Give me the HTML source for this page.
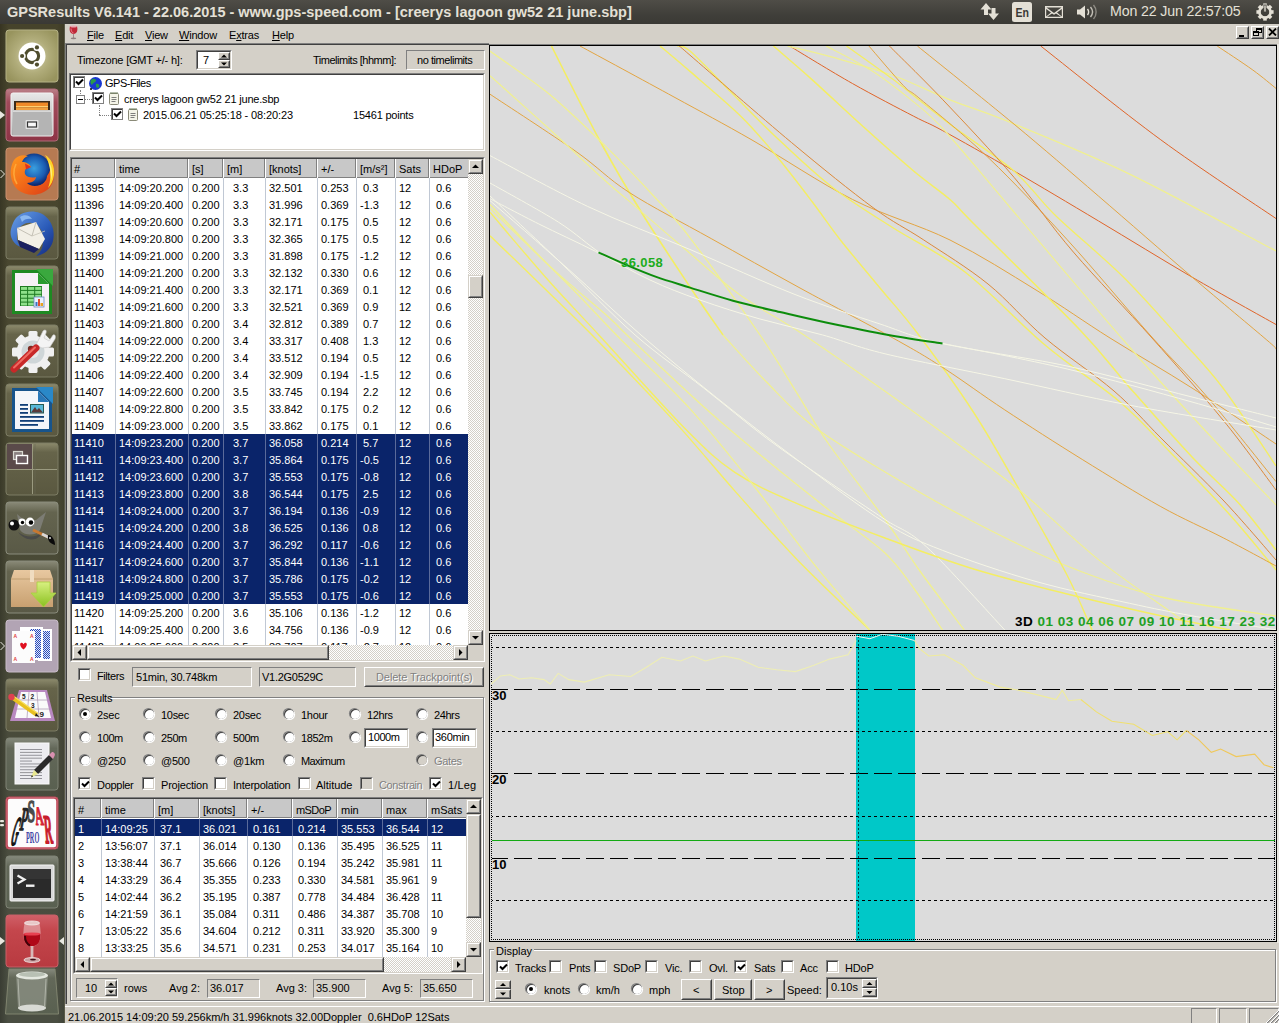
<!DOCTYPE html><html><head><meta charset="utf-8"><title>GPSResults</title><style>
*{box-sizing:border-box;margin:0;padding:0}
html,body{width:1279px;height:1023px;overflow:hidden;background:#d4d0c8}
body{font-family:"Liberation Sans",sans-serif;font-size:11px;color:#000;position:relative}
.a{position:absolute}
.t{position:absolute;white-space:nowrap;line-height:13px;height:13px}
.sunk{position:absolute;border:1px solid;border-color:#808080 #fff #fff #808080;background:#d4d0c8}
.sunk2{position:absolute;border:1px solid;border-color:#808080 #fff #fff #808080}
.sunk2>i{position:absolute;left:0;top:0;right:0;bottom:0;border:1px solid;border-color:#404040 #d4d0c8 #d4d0c8 #404040;background:#fff}
.btn{position:absolute;background:#d4d0c8;border:1px solid;border-color:#fff #404040 #404040 #fff}
.btn>i{position:absolute;left:0;top:0;right:0;bottom:0;border:1px solid;border-color:#d4d0c8 #808080 #808080 #d4d0c8}
.sb{position:absolute;background:#d4d0c8;border:1px solid;border-color:#d4d0c8 #404040 #404040 #d4d0c8}
.sb>i{position:absolute;left:0;top:0;right:0;bottom:0;border:1px solid;border-color:#fff #808080 #808080 #fff}
.trk{position:absolute;background-color:#fff;background-image:conic-gradient(#d4d0c8 25%,#fff 0 50%,#d4d0c8 0 75%,#fff 0);background-size:2px 2px}
.cb{position:absolute;width:13px;height:13px;border:1px solid;border-color:#808080 #fff #fff #808080}
.cb>i{position:absolute;left:0;top:0;right:0;bottom:0;border:1px solid;border-color:#404040 #d4d0c8 #d4d0c8 #404040;background:#fff}
.cb.dis>i{background:#d4d0c8}
.rb{position:absolute;width:10px;height:10px;border-radius:50%;background:#fff;box-shadow:inset 1px 1px 0 0 #404040, -0.5px -0.5px 0 0.6px #808080, 0.5px 0.5px 0 0.6px #fff}
.hd{position:absolute;background:#c8c8c8}
</style></head><body>
<div class="a" style="left:0;top:0;width:1279px;height:24px;background:linear-gradient(#4f4d47,#403f3a 60%,#3a3935)"></div>
<div class="t" style="left:7px;top:4px;font-weight:bold;font-size:14.5px;color:#e4e0d6;line-height:17px;height:17px">GPSResults V6.141 - 22.06.2015 - www.gps-speed.com - [creerys lagoon gw52 21 june.sbp]</div>
<div class="t" style="left:1110px;top:3px;font-size:14.2px;letter-spacing:-0.15px;color:#e4e0d6;line-height:17px;height:17px">Mon 22 Jun 22:57:05</div>
<svg class="a" style="left:978px;top:0" width="301" height="24" viewBox="978 0 301 24"><g fill="#e4e0d6"><path d="M986 3 L991.5 9.5 H988 V15 H984 V9.5 H980.5Z"/><path d="M993.5 20 L988 13.5 H991.5 V8 H995.5 V13.5 H999Z"/><rect x="1012" y="2" width="20" height="20" rx="2.5"/><path d="M1045 6 H1063 V18 H1045Z M1046.5 7.5 L1054 13 L1061.5 7.5Z M1046.2 9 V16.5 L1051 12.5Z M1061.8 9 V16.5 L1057 12.5Z M1047 16.8 L1052 13.4 L1054 14.8 L1056 13.4 L1061 16.8Z" fill-rule="evenodd"/><path d="M1077 9.5 H1080 L1085 5.5 V18.5 L1080 14.5 H1077Z"/></g><g fill="none" stroke="#e4e0d6" stroke-width="1.4"><path d="M1087.5 9 C1089 11 1089 13 1087.5 15"/><path d="M1090.5 7 C1093 10 1093 14 1090.5 17" opacity="0.8"/><path d="M1093.5 5 C1097 9 1097 15 1093.5 19" opacity="0.45"/></g><g transform="translate(1265,12)"><g fill="#e4e0d6"><rect x="-1.8" y="-8.6" width="3.6" height="4" transform="rotate(0)"/><rect x="-1.8" y="-8.6" width="3.6" height="4" transform="rotate(45)"/><rect x="-1.8" y="-8.6" width="3.6" height="4" transform="rotate(90)"/><rect x="-1.8" y="-8.6" width="3.6" height="4" transform="rotate(135)"/><rect x="-1.8" y="-8.6" width="3.6" height="4" transform="rotate(180)"/><rect x="-1.8" y="-8.6" width="3.6" height="4" transform="rotate(225)"/><rect x="-1.8" y="-8.6" width="3.6" height="4" transform="rotate(270)"/><rect x="-1.8" y="-8.6" width="3.6" height="4" transform="rotate(315)"/></g><circle r="5.6" fill="none" stroke="#e4e0d6" stroke-width="2.6"/><rect x="-1.1" y="-7" width="2.2" height="7" fill="#e4e0d6" stroke="#3d3c38" stroke-width="0.8"/></g><text x="1015.5" y="17" font-family="Liberation Sans" font-size="12.5" fill="#3a3935" font-weight="bold" textLength="13.5" lengthAdjust="spacingAndGlyphs">En</text></svg>
<div class="a" style="left:0;top:24px;width:65px;height:999px;background:linear-gradient(#46432b 0%,#4a4932 40%,#494b3b 70%,#4a4e42 100%)"></div>
<div class="a" style="left:0;top:24px;width:65px;height:999px;background:linear-gradient(90deg,rgba(0,0,0,0.22),rgba(0,0,0,0) 8px,rgba(0,0,0,0) 57px,rgba(0,0,0,0.15))"></div>
<div class="a" style="left:64px;top:24px;width:1px;height:999px;background:#5a5a48"></div>
<svg class="a" style="left:0;top:24px" width="65" height="999" viewBox="0 24 65 999">
<defs>
<radialGradient id="gU" cx="50%" cy="50%" r="60%"><stop offset="0" stop-color="#dad7b4"/><stop offset="0.55" stop-color="#b0ac7a"/><stop offset="1" stop-color="#98945e"/></radialGradient>
<linearGradient id="gF" x1="0" y1="0" x2="0" y2="1"><stop offset="0" stop-color="#bb8088"/><stop offset="0.25" stop-color="#a04a5a"/><stop offset="1" stop-color="#8e3446"/></linearGradient>
<linearGradient id="gT" x1="0" y1="0" x2="0" y2="1"><stop offset="0" stop-color="#8c8a6c"/><stop offset="0.18" stop-color="#66644a"/><stop offset="1" stop-color="#5a5840"/></linearGradient>
<linearGradient id="gT2" x1="0" y1="0" x2="0" y2="1"><stop offset="0" stop-color="#8a8a78"/><stop offset="0.2" stop-color="#64644f"/><stop offset="1" stop-color="#595946"/></linearGradient><linearGradient id="gT3" x1="0" y1="0" x2="0" y2="1"><stop offset="0" stop-color="#85897c"/><stop offset="0.2" stop-color="#636859"/><stop offset="1" stop-color="#596050"/></linearGradient>
<linearGradient id="gW" x1="0" y1="0" x2="0" y2="1"><stop offset="0" stop-color="#d06068"/><stop offset="0.3" stop-color="#c4464c"/><stop offset="1" stop-color="#b83a40"/></linearGradient>
<radialGradient id="gFx" cx="50%" cy="45%" r="50%"><stop offset="0" stop-color="#3aa0e0"/><stop offset="0.7" stop-color="#1a5ab0"/><stop offset="1" stop-color="#102a70"/></radialGradient>
<linearGradient id="gFo" x1="0" y1="0" x2="1" y2="1"><stop offset="0" stop-color="#ff9a20"/><stop offset="0.5" stop-color="#f26a18"/><stop offset="1" stop-color="#d83a18"/></linearGradient>
<linearGradient id="gCab" x1="0" y1="0" x2="0" y2="1"><stop offset="0" stop-color="#e8e8e8"/><stop offset="1" stop-color="#a8a8a8"/></linearGradient>
<linearGradient id="gBox" x1="0" y1="0" x2="0" y2="1"><stop offset="0" stop-color="#e8c8a0"/><stop offset="1" stop-color="#c8a070"/></linearGradient>
<linearGradient id="gArr" x1="0" y1="0" x2="0" y2="1"><stop offset="0" stop-color="#d8f080"/><stop offset="1" stop-color="#8ac020"/></linearGradient>
<linearGradient id="gTb" x1="0" y1="0" x2="1" y2="1"><stop offset="0" stop-color="#6aa0e8"/><stop offset="0.6" stop-color="#2a5ab8"/><stop offset="1" stop-color="#14287a"/></linearGradient>
<pattern id="pCk" width="2" height="2" patternUnits="userSpaceOnUse"><rect width="2" height="2" fill="#dfe6fa"/><rect width="1" height="1" fill="#2a4ab8"/><rect x="1" y="1" width="1" height="1" fill="#2a4ab8"/></pattern></defs>
<rect x="6" y="30" width="52" height="52" rx="3" fill="url(#gU)" stroke="#b5b286" stroke-width="1" opacity="1"/>
<g transform="translate(32,56)"><circle r="13.5" fill="#fff"/><circle r="6.6" fill="none" stroke="#4f4d2e" stroke-width="3.1"/><g fill="#fff"><circle cx="-9.6" cy="0" r="3.3"/><circle cx="4.8" cy="-8.3" r="3.3"/><circle cx="4.8" cy="8.3" r="3.3"/></g><g fill="#4f4d2e"><circle cx="-9.9" cy="0" r="2.1"/><circle cx="4.95" cy="-8.6" r="2.1"/><circle cx="4.95" cy="8.6" r="2.1"/></g></g>
<rect x="6" y="89" width="52" height="52" rx="3" fill="url(#gF)" stroke="#b06a78" stroke-width="1" opacity="1"/>
<g transform="translate(6,89)"><rect x="5" y="4" width="42" height="43" rx="2" fill="url(#gCab)" stroke="#f4f4f4" stroke-width="1"/><rect x="8" y="12" width="36" height="9" fill="#3a2a1a"/><rect x="10" y="13.5" width="32" height="3.5" fill="#f08a28"/><rect x="10" y="17" width="32" height="1.2" fill="#ffd070"/><rect x="10" y="18.2" width="32" height="3" fill="#f0a040"/><rect x="7" y="21.5" width="38" height="24.5" fill="#b4b4b4"/><rect x="7" y="21.5" width="38" height="1.5" fill="#d8d8d8"/><rect x="19.5" y="31" width="13" height="9" rx="1" fill="#e4e4e4"/><rect x="21.5" y="33" width="9" height="5" fill="#f8f8f8" stroke="#333" stroke-width="1.2"/></g>
<path d="M0 111 L5 115 L0 119Z" fill="#e8e8e0"/>
<rect x="6" y="148" width="52" height="52" rx="3" fill="#b67a52" stroke="#c89070" stroke-width="1" opacity="1"/>
<g transform="translate(6,148)"><circle cx="28" cy="22" r="16.5" fill="url(#gFx)"/><path d="M8 12 C3 20 3 34 12 42 C22 50 40 48 46 36 C49 29 49 20 46 12 C46 18 44 24 41 28 C41 33 36 38 29 38 C25 38 22 36 21 35 C26 35 30 32 30 29 C27 30 21 30 19 26 C18 22 20 19 25 19 C24 16 20 14 16 14 C17 11 19 9 22 8 C17 6 11 8 8 12Z" fill="url(#gFo)"/><path d="M39 7 C45 10 49 18 48 27 C47 33 45 37 42 40 C45 33 45 24 43 17 C42 13 41 10 39 7Z" fill="#ffd428"/><path d="M43 14 C46 19 47 26 45 32 C45 26 44 19 43 14Z" fill="#fff080"/><path d="M19 15.5 L25 19 L20 21.5Z" fill="#e03020"/><path d="M10 16 C7 22 7 30 11 36" stroke="#ffb040" stroke-width="1.6" fill="none" opacity="0.8"/></g>
<path d="M0.5 170 L4.5 174 L0.5 178" fill="none" stroke="#e8e8e0" stroke-width="1"/>
<rect x="6" y="207" width="52" height="52" rx="3" fill="url(#gT)" stroke="#7c7c64" stroke-width="1" opacity="1"/>
<g transform="translate(6,207)"><path d="M8 14 C12 6 24 2 34 6 C44 10 50 22 47 34 C45 42 38 48 30 49 C36 44 38 38 36 32 C38 26 34 18 26 16 C20 15 14 18 12 24 C10 30 11 36 15 40 C8 38 3 30 5 22 C6 18 7 16 8 14Z" fill="url(#gTb)"/><path d="M11 21 L30 15 L39 32 L33 42 L12 33Z" fill="#f2efe6"/><path d="M11 21 L26 29 L30 15" fill="none" stroke="#b8b4a8" stroke-width="0.8"/><path d="M26 29 L39 24" stroke="#c8c4b8" stroke-width="0.8"/><path d="M12 33 L33 42 L28 46 L14 40Z" fill="#1a2060"/><path d="M14 10 C18 7 24 8 26 12 C22 11 18 12 16 15Z" fill="#8ab8f0"/></g>
<rect x="6" y="266" width="52" height="52" rx="3" fill="url(#gT)" stroke="#7c7c64" stroke-width="1" opacity="1"/>
<g transform="translate(6,266)"><path d="M6 4 L34 4 L46 16 L46 48 L6 48Z" fill="#1e8a22"/><path d="M30 3 L47 3 L47 20Z" fill="#3aa83e"/><path d="M9 7 L32 7 L43 18 L43 45 L9 45Z" fill="#f6f0f6"/><path d="M32 7 L43 18 L32 18Z" fill="#2a9a2e"/><rect x="14" y="20" width="22" height="20" fill="#1e7a22"/><rect x="15.0" y="21.0" width="6.1" height="2.9" fill="#8ee08a"/><rect x="15.0" y="24.9" width="6.1" height="2.9" fill="#8ee08a"/><rect x="15.0" y="28.8" width="6.1" height="2.9" fill="#8ee08a"/><rect x="15.0" y="32.7" width="6.1" height="2.9" fill="#8ee08a"/><rect x="15.0" y="36.6" width="6.1" height="2.9" fill="#8ee08a"/><rect x="22.1" y="21.0" width="6.1" height="2.9" fill="#8ee08a"/><rect x="22.1" y="24.9" width="6.1" height="2.9" fill="#8ee08a"/><rect x="22.1" y="28.8" width="6.1" height="2.9" fill="#8ee08a"/><rect x="22.1" y="32.7" width="6.1" height="2.9" fill="#8ee08a"/><rect x="22.1" y="36.6" width="6.1" height="2.9" fill="#8ee08a"/><rect x="29.2" y="21.0" width="6.1" height="2.9" fill="#8ee08a"/><rect x="29.2" y="24.9" width="6.1" height="2.9" fill="#8ee08a"/><rect x="29.2" y="28.8" width="6.1" height="2.9" fill="#8ee08a"/><rect x="29.2" y="32.7" width="6.1" height="2.9" fill="#8ee08a"/><rect x="29.2" y="36.6" width="6.1" height="2.9" fill="#8ee08a"/><rect x="28" y="31" width="10" height="10" fill="#e8f0ff" stroke="#6a8ac0" stroke-width="0.8"/><rect x="29.5" y="36" width="2" height="4" fill="#3a70c0"/><rect x="32" y="33" width="2" height="7" fill="#e05030"/><rect x="34.5" y="37" width="2.5" height="3" fill="#e8a020"/></g>
<rect x="6" y="325" width="52" height="52" rx="3" fill="url(#gT)" stroke="#7c7c64" stroke-width="1" opacity="1"/>
<g transform="translate(6,325)"><g transform="translate(27,27)"><rect x="-4.5" y="-21" width="9" height="42" rx="1.5" fill="#f0f0f0" transform="rotate(0)"/><rect x="-4.5" y="-21" width="9" height="42" rx="1.5" fill="#f0f0f0" transform="rotate(45)"/><rect x="-4.5" y="-21" width="9" height="42" rx="1.5" fill="#f0f0f0" transform="rotate(90)"/><rect x="-4.5" y="-21" width="9" height="42" rx="1.5" fill="#f0f0f0" transform="rotate(135)"/><circle r="16.5" fill="#f0f0f0"/><circle r="11.5" fill="#cfd6d8"/><circle r="6" fill="#e8e8e8"/><circle cx="-2" cy="-3" r="3.2" fill="#7a2a20"/></g><path d="M30 20 L37 6 C39 4 41 5 40 8 L38 13 L43 16 L47 10 C49 9 50 11 49 14 L44 22 L36 23Z" fill="#f4f4f4" stroke="#c8c8c8" stroke-width="0.6"/><path d="M8 44 L30 23" stroke="#c82828" stroke-width="7" stroke-linecap="round"/><path d="M8 42.5 L29 22.5" stroke="#ee6a60" stroke-width="2" stroke-linecap="round"/></g>
<rect x="6" y="384" width="52" height="52" rx="3" fill="url(#gT)" stroke="#7c7c64" stroke-width="1" opacity="1"/>
<g transform="translate(6,384)"><path d="M6 4 L34 4 L46 16 L46 48 L6 48Z" fill="#17548c"/><path d="M30 3 L47 3 L47 20Z" fill="#2a88c8"/><path d="M9 7 L32 7 L43 18 L43 45 L9 45Z" fill="#f4f6fa"/><path d="M32 7 L43 18 L32 18Z" fill="#2a78b8"/><rect x="14" y="20" width="8" height="1.8" fill="#103e78"/><rect x="14" y="24" width="8" height="1.8" fill="#103e78"/><rect x="14" y="28" width="8" height="1.8" fill="#103e78"/><rect x="14" y="32" width="24" height="1.8" fill="#103e78"/><rect x="14" y="36" width="24" height="1.8" fill="#103e78"/><rect x="14" y="40" width="18" height="1.8" fill="#103e78"/><rect x="24" y="20" width="14" height="9.5" fill="#285a50"/><rect x="25" y="21" width="12" height="7.5" fill="#58b8d8"/><path d="M25 28.5 L29 23 L31 26 L33 24 L37 28.5Z" fill="#5a3a3a"/></g>
<rect x="6" y="443" width="52" height="52" rx="3" fill="url(#gT)" stroke="#7c7c64" stroke-width="1" opacity="1"/>
<g transform="translate(6,443)"><rect x="1" y="1" width="25" height="25" fill="#5a4a4a"/><path d="M26.5 1 V51 M1 26.5 H51" stroke="#9a9a80" stroke-width="1"/><path d="M29 1 V51" stroke="#6a6a54" stroke-width="0.6"/><rect x="7.5" y="8.5" width="9" height="8" fill="#8a8080" stroke="#d8d8d0" stroke-width="1.2"/><rect x="10.5" y="12.5" width="11" height="8" fill="#6a5a60" stroke="#fff" stroke-width="1.4"/></g>
<rect x="6" y="502" width="52" height="52" rx="3" fill="url(#gT2)" stroke="#8a8c7c" stroke-width="1" opacity="1"/>
<g transform="translate(6,502)"><path d="M11 12 L14 28 C18 34 30 34 34 28 L40 10 L30 18 L18 18Z" fill="#7c7c74"/><path d="M12 30 C20 36 30 36 36 30 L34 34 C28 40 18 38 12 30Z" fill="#4a4a48"/><circle cx="8" cy="23" r="5.5" fill="#101010"/><circle cx="6" cy="21.5" r="2" fill="#fff"/><circle cx="16" cy="20" r="3.4" fill="#fff"/><circle cx="16.5" cy="20.5" r="1.7" fill="#000"/><circle cx="24" cy="20" r="4.4" fill="#fff"/><circle cx="25" cy="20.5" r="2.2" fill="#000"/><path d="M27 28 L42 35" stroke="#c87830" stroke-width="3"/><path d="M36 32 L43 35.5" stroke="#d8d8d8" stroke-width="3"/><path d="M42 33 C46 33 49 38 49 43 C45 42 41 39 42 33Z" fill="#0a0a0a"/><circle cx="44" cy="36" r="1" fill="#ddd"/></g>
<rect x="6" y="561" width="52" height="52" rx="3" fill="url(#gT2)" stroke="#8a8c7c" stroke-width="1" opacity="1"/>
<g transform="translate(6,561)"><path d="M8 9 L44 9 L47 18 L47 46 L5 46 L5 18Z" fill="url(#gBox)"/><path d="M5 18 H47" stroke="#b89868" stroke-width="0.8"/><rect x="24" y="9" width="4" height="12" fill="#f0dcc0"/><path d="M31 21 H44 V32 H50 L37.5 46 L25 32 H31Z" fill="url(#gArr)" stroke="#a8d040" stroke-width="0.8"/></g>
<rect x="6" y="620" width="52" height="52" rx="3" fill="#b2a4b4" stroke="#c8bcc8" stroke-width="1" opacity="1"/>
<g transform="translate(6,620)"><rect x="32" y="9" width="14" height="32" fill="#fff"/><rect x="34" y="11" width="10" height="28" fill="url(#pCk)"/><rect x="14" y="7" width="23" height="33" fill="#fff"/><rect x="24" y="9" width="11" height="29" fill="url(#pCk)"/><rect x="6" y="11" width="23" height="32" fill="#fcfcfc"/><path d="M17.5 24.2 C15 20.5 11.5 24.5 17.5 29.5 C23.5 24.5 20 20.5 17.5 24.2Z" fill="#e01020"/><g fill="#e04040" font-family="Liberation Sans" font-size="5" font-weight="bold"><text x="7.5" y="18">A</text><text x="24" y="18">A</text><text x="7.5" y="41">A</text><text x="24" y="41">A</text></g></g>
<path d="M0.5 642 L4.5 646 L0.5 650" fill="none" stroke="#e8e8e0" stroke-width="1"/>
<rect x="6" y="679" width="52" height="52" rx="3" fill="url(#gT)" stroke="#7c7c64" stroke-width="1" opacity="1"/>
<g transform="translate(6,679)"><path d="M13 11 L41 11 L49 42 L4 42Z" fill="#b888c0"/><path d="M15 13 L39 13 L45 39 L9 39Z" fill="#fafafa"/><path d="M23 13 L21 39 M31 13 L33 39 M13 21 H42 M11 30 H44" stroke="#b0a0b8" stroke-width="0.8"/><g font-family="Liberation Sans" font-size="6.5" font-weight="bold" fill="#222"><text x="16" y="20">5</text><text x="24.5" y="20">2</text><text x="25" y="28.5">3</text><text x="33.5" y="37.5" font-size="8">9</text></g><path d="M7 19 L31 36" stroke="#e8c020" stroke-width="4"/><path d="M8 17.5 L32 34.5" stroke="#f8e060" stroke-width="1.2"/><circle cx="5.5" cy="18" r="3.2" fill="#e04050"/><path d="M30 34 L33.5 38 L29 37Z" fill="#222"/></g>
<rect x="6" y="738" width="52" height="52" rx="3" fill="url(#gT3)" stroke="#7e8274" stroke-width="1" opacity="1"/>
<g transform="translate(6,738)"><rect x="9" y="5" width="34" height="41" fill="#ececf0" stroke="#fafafa" stroke-width="1"/><rect x="14" y="11.0" width="22" height="0.9" fill="#8a8a90"/><rect x="14" y="13.9" width="22" height="0.9" fill="#8a8a90"/><rect x="14" y="16.8" width="22" height="0.9" fill="#8a8a90"/><rect x="14" y="19.7" width="22" height="0.9" fill="#8a8a90"/><rect x="14" y="22.6" width="12" height="0.9" fill="#8a8a90"/><rect x="14" y="25.5" width="22" height="0.9" fill="#8a8a90"/><rect x="14" y="28.4" width="22" height="0.9" fill="#8a8a90"/><rect x="14" y="31.3" width="22" height="0.9" fill="#8a8a90"/><rect x="14" y="34.2" width="22" height="0.9" fill="#8a8a90"/><rect x="14" y="37.099999999999994" width="22" height="0.9" fill="#8a8a90"/><rect x="14" y="40.0" width="22" height="0.9" fill="#8a8a90"/><path d="M28 32 L43 17 L47 21 L32 36Z" fill="#2a2a2a"/><path d="M43 17 L45.5 14.5 C47 13 50 16 48.5 18 L47 21Z" fill="#d890b0"/><path d="M28 32 L32 36 L25 39.5Z" fill="#e8e890"/><path d="M25 39.5 L27 38.5 L26 37Z" fill="#111"/></g>
<rect x="6" y="797" width="52" height="52" rx="3" fill="#fdfcfc" stroke="#c04858" stroke-width="1" opacity="1"/>
<rect x="7" y="798" width="50" height="50" rx="3" fill="none" stroke="#c04858" stroke-width="1.6"/>
<g transform="translate(6,797)" font-family="Liberation Serif" font-weight="bold" font-size="16" stroke-width="0.7" paint-order="stroke"><text fill="#141414" stroke="#141414" transform="translate(3.5,47.5) skewX(-14) scale(0.52,2.55)">G</text><text fill="#262626" stroke="#262626" transform="translate(13,32.5) skewX(-10) scale(0.72,2.05)">P</text><text fill="#4a4a4a" stroke="#4a4a4a" transform="translate(21.5,25) scale(0.85,2.0)">S</text><text fill="#d42434" stroke="#d42434" transform="translate(30,27.5) skewX(8) scale(0.72,1.65)">A</text><text fill="#c81c2c" stroke="#c81c2c" transform="translate(39.5,45.5) skewX(5) scale(0.68,2.55)">R</text><text fill="#4444a4" font-size="9" transform="translate(20,45.5) scale(0.7,1.75)">PRO</text></g>
<rect x="0" y="820" width="4" height="2.2" rx="1" fill="#e8e8e0"/><rect x="0" y="824" width="4" height="2.2" rx="1" fill="#e8e8e0"/>
<rect x="6" y="856" width="52" height="52" rx="3" fill="url(#gT3)" stroke="#7e8274" stroke-width="1" opacity="1"/>
<g transform="translate(6,856)"><rect x="4" y="9" width="44" height="36" rx="1" fill="#d8d8d8" stroke="#f4f4f4" stroke-width="1"/><rect x="7" y="13" width="38" height="29" fill="#2a2a2a"/><rect x="7" y="13" width="38" height="10" fill="#3c3c3c" opacity="0.6"/><path d="M11.5 19.5 L18.5 23.5 L11.5 27.5" fill="none" stroke="#f0f0f0" stroke-width="2.2"/><rect x="20" y="28.5" width="8.5" height="2.4" fill="#f0f0f0"/></g>
<rect x="6" y="915" width="52" height="52" rx="3" fill="url(#gW)" stroke="#c86068" stroke-width="1" opacity="1"/>
<g transform="translate(6,915)"><path d="M18.5 8 C16 22 17 30 26 32 C35 30 36 22 33.5 8Z" fill="#e8b0b4" opacity="0.65"/><ellipse cx="26" cy="8" rx="7.6" ry="2" fill="#e8c8c8" stroke="#f4e8e8" stroke-width="0.8"/><path d="M17.6 19 C17.5 27 20 30.5 26 31.5 C32 30.5 34.5 27 34.4 19Z" fill="#b00818"/><ellipse cx="26" cy="19" rx="8.4" ry="1.6" fill="#e84050"/><path d="M19 21 C19 26 21 29 24 30.5" stroke="#40040a" stroke-width="2" fill="none"/><rect x="24.6" y="31" width="2.8" height="13" fill="#d8b8b8"/><ellipse cx="26" cy="45" rx="8" ry="2.4" fill="#c8a0a0" stroke="#f0e0e0" stroke-width="0.9"/><ellipse cx="27" cy="44.6" rx="3" ry="0.9" fill="#401018"/></g>
<path d="M0 937 L5 941 L0 945Z" fill="#e8e8e0"/><path d="M64 937 L59 941 L64 945Z" fill="#e8e8e0"/>
<path d="M9 969 L55 969 L58.5 1014 L5.5 1014Z" fill="url(#gT3)" stroke="#80846f" stroke-width="1"/>
<g transform="translate(6,969)"><path d="M10 6 L42 6 L40 39 L12 39Z" fill="#8a8e82" opacity="0.8"/><ellipse cx="26" cy="6.5" rx="16" ry="4" fill="#e4e8e0"/><ellipse cx="26" cy="5.5" rx="13" ry="2.4" fill="#b8c0b4"/><ellipse cx="26" cy="39" rx="14" ry="3.4" fill="#d8dad4"/><path d="M12 10 L13.5 38 M40 10 L38.5 38" stroke="#b0b4a8" stroke-width="1"/></g>
</svg>
<div class="a" style="left:65px;top:24px;width:1214px;height:20px;background:#d4d0c8;"></div>
<div class="t" style="left:87px;top:29px;letter-spacing:-0.2px"><u>F</u>ile</div>
<div class="t" style="left:115px;top:29px;letter-spacing:-0.2px"><u>E</u>dit</div>
<div class="t" style="left:145px;top:29px;letter-spacing:-0.2px"><u>V</u>iew</div>
<div class="t" style="left:179px;top:29px;letter-spacing:-0.2px"><u>W</u>indow</div>
<div class="t" style="left:229px;top:29px;letter-spacing:-0.2px">E<u>x</u>tras</div>
<div class="t" style="left:272px;top:29px;letter-spacing:-0.2px"><u>H</u>elp</div>
<svg class="a" style="left:68px;top:25px" width="11" height="15" viewBox="0 0 11 15"><path d="M2 1 C1 6 2 8.5 5.5 9 C9 8.5 10 6 9 1Z" fill="#c02838"/><ellipse cx="5.5" cy="1.6" rx="3.4" ry="1" fill="#e8a8b0"/><path d="M3 3.5 C3 6 4 7.5 5.5 8" stroke="#f0a0a8" stroke-width="0.8" fill="none"/><rect x="5" y="9" width="1" height="4" fill="#a08a8a"/><ellipse cx="5.5" cy="13.3" rx="2.8" ry="0.9" fill="#908080"/></svg>
<div class="btn" style="left:1236px;top:26px;width:13px;height:13px"><i></i></div>
<div class="a" style="left:1239px;top:35px;width:5px;height:2px;background:#000"></div>
<div class="btn" style="left:1251px;top:26px;width:13px;height:13px"><i></i></div>
<div class="a" style="left:1256px;top:28px;width:6px;height:5px;border:1px solid #000;border-top-width:2px"></div>
<div class="a" style="left:1253px;top:31px;width:6px;height:5px;border:1px solid #000;border-top-width:2px;background:#d4d0c8"></div>
<div class="btn" style="left:1266px;top:26px;width:13px;height:13px"><i></i></div>
<svg class="a" style="left:1268px;top:28px" width="9" height="8" viewBox="0 0 9 8"><path d="M1 0.5 L8 7.5 M8 0.5 L1 7.5" stroke="#000" stroke-width="1.8"/></svg>
<div class="a" style="left:65px;top:43px;width:424px;height:1px;background:#808080;"></div>
<div class="a" style="left:65px;top:44px;width:424px;height:1px;background:#404040;"></div>
<div class="a" style="left:65px;top:43px;width:1px;height:961px;background:#808080;"></div>
<div class="a" style="left:66px;top:44px;width:1px;height:960px;background:#404040;"></div>
<div class="t" style="left:77px;top:54px;letter-spacing:-0.20px;">Timezone [GMT +/- h]:</div>
<div class="sunk2" style="left:196px;top:50px;width:36px;height:20px"><i></i></div>
<div class="t" style="left:203px;top:54px;">7</div>
<div class="btn" style="left:218px;top:52px;width:12px;height:8px"><i></i></div>
<svg class="a" style="left:218px;top:52px" width="12" height="8"><path d="M3.0 5.5 L6.0 2.5 L9.0 5.5Z" fill="#000"/></svg>
<div class="btn" style="left:218px;top:60px;width:12px;height:8px"><i></i></div>
<svg class="a" style="left:218px;top:60px" width="12" height="8"><path d="M3.0 2.5 L6.0 5.5 L9.0 2.5Z" fill="#000"/></svg>
<div class="t" style="left:313px;top:54px;letter-spacing:-0.49px;">Timelimits [hhmm]:</div>
<div class="sunk" style="left:406px;top:50px;width:79px;height:20px"></div>
<div class="t" style="left:417px;top:54px;letter-spacing:-0.45px;">no timelimits</div>
<div class="sunk2" style="left:69px;top:73px;width:416px;height:78px"><i></i></div>
<div class="a" style="left:73px;top:76px;width:12px;height:12px;border:1px solid #808080;background:#fff;box-shadow:inset 1px 1px 0 #404040"><svg class="a" style="left:1px;top:1px" width="9" height="9" viewBox="0 0 9 9"><path d="M1 3.5 L3.5 6 L8 1.5" fill="none" stroke="#000" stroke-width="2"/></svg></div>
<svg class="a" style="left:88px;top:76px" width="15" height="15" viewBox="0 0 15 15"><circle cx="7.5" cy="7.5" r="6.5" fill="#1838d0"/><path d="M3 4 C5 2 8 2.5 8 5 C7 7 5 6.5 4 9 C2.5 8 2 6 3 4Z M8 8 C10 7 12 8.5 11 11 C10 12.5 8 12 8 10Z" fill="#2a9a4a"/><circle cx="3" cy="13" r="1" fill="#000"/></svg>
<div class="t" style="left:105px;top:77px;letter-spacing:-0.49px;">GPS-Files</div>
<div class="a" style="left:80px;top:90px;width:0;height:6px;border-left:1px dotted #808080"></div>
<div class="a" style="left:85px;top:99px;width:7px;height:0;border-top:1px dotted #808080"></div>
<div class="a" style="left:76px;top:95px;width:9px;height:9px;border:1px solid #808080;background:#fff"><div class="a" style="left:1px;top:3px;width:5px;height:1px;background:#000"></div></div>
<div class="a" style="left:92px;top:92px;width:12px;height:12px;border:1px solid #808080;background:#fff;box-shadow:inset 1px 1px 0 #404040"><svg class="a" style="left:1px;top:1px" width="9" height="9" viewBox="0 0 9 9"><path d="M1 3.5 L3.5 6 L8 1.5" fill="none" stroke="#000" stroke-width="2"/></svg></div>
<svg class="a" style="left:108px;top:91px" width="12" height="14" viewBox="0 0 12 14"><rect x="1.5" y="2.5" width="9" height="11" rx="1" fill="#f4f4e8" stroke="#8a8a78"/><path d="M3 1 V3 M5 1 V3 M7 1 V3 M9 1 V3" stroke="#6a7a5a" stroke-width="1"/><path d="M3.5 6.5 H8.5 M3.5 8.5 H8.5 M3.5 10.5 H7.5" stroke="#707070" stroke-width="0.9"/></svg>
<div class="t" style="left:124px;top:93px;letter-spacing:-0.20px;">creerys lagoon gw52 21 june.sbp</div>
<div class="a" style="left:99px;top:105px;width:0;height:10px;border-left:1px dotted #808080"></div>
<div class="a" style="left:99px;top:115px;width:12px;height:0;border-top:1px dotted #808080"></div>
<div class="a" style="left:111px;top:108px;width:12px;height:12px;border:1px solid #808080;background:#fff;box-shadow:inset 1px 1px 0 #404040"><svg class="a" style="left:1px;top:1px" width="9" height="9" viewBox="0 0 9 9"><path d="M1 3.5 L3.5 6 L8 1.5" fill="none" stroke="#000" stroke-width="2"/></svg></div>
<svg class="a" style="left:127px;top:107px" width="12" height="14" viewBox="0 0 12 14"><rect x="1.5" y="2.5" width="9" height="11" rx="1" fill="#f4f4e8" stroke="#8a8a78"/><path d="M3 1 V3 M5 1 V3 M7 1 V3 M9 1 V3" stroke="#6a7a5a" stroke-width="1"/><path d="M3.5 6.5 H8.5 M3.5 8.5 H8.5 M3.5 10.5 H7.5" stroke="#707070" stroke-width="0.9"/></svg>
<div class="t" style="left:143px;top:109px;letter-spacing:-0.12px;">2015.06.21 05:25:18 - 08:20:23</div>
<div class="t" style="left:353px;top:109px;letter-spacing:-0.21px;">15461 points</div>
<div class="sunk2" style="left:70px;top:157px;width:415px;height:505px"><i></i></div>
<div class="a" style="left:72px;top:159px;width:396px;height:486px;overflow:hidden;background:#fff">
<div class="a" style="left:0;top:0;width:396px;height:19px;background:#c8c8c8;border-bottom:1px solid #808080"></div>
<div class="a" style="left:43px;top:0;width:1px;height:486px;background:#c0c8d4"></div>
<div class="a" style="left:42px;top:0;width:2px;height:19px;background:#808080;border-right:1px solid #fff"></div>
<div class="a" style="left:116px;top:0;width:1px;height:486px;background:#c0c8d4"></div>
<div class="a" style="left:115px;top:0;width:2px;height:19px;background:#808080;border-right:1px solid #fff"></div>
<div class="a" style="left:151px;top:0;width:1px;height:486px;background:#c0c8d4"></div>
<div class="a" style="left:150px;top:0;width:2px;height:19px;background:#808080;border-right:1px solid #fff"></div>
<div class="a" style="left:193px;top:0;width:1px;height:486px;background:#c0c8d4"></div>
<div class="a" style="left:192px;top:0;width:2px;height:19px;background:#808080;border-right:1px solid #fff"></div>
<div class="a" style="left:245px;top:0;width:1px;height:486px;background:#c0c8d4"></div>
<div class="a" style="left:244px;top:0;width:2px;height:19px;background:#808080;border-right:1px solid #fff"></div>
<div class="a" style="left:284px;top:0;width:1px;height:486px;background:#c0c8d4"></div>
<div class="a" style="left:283px;top:0;width:2px;height:19px;background:#808080;border-right:1px solid #fff"></div>
<div class="a" style="left:323px;top:0;width:1px;height:486px;background:#c0c8d4"></div>
<div class="a" style="left:322px;top:0;width:2px;height:19px;background:#808080;border-right:1px solid #fff"></div>
<div class="a" style="left:357px;top:0;width:1px;height:486px;background:#c0c8d4"></div>
<div class="a" style="left:356px;top:0;width:2px;height:19px;background:#808080;border-right:1px solid #fff"></div>
<div class="a" style="left:0;top:275px;width:396px;height:170px;background:#0a246a"></div>
<div class="a" style="left:43px;top:275px;width:1px;height:170px;background:#5a6a9a"></div>
<div class="a" style="left:116px;top:275px;width:1px;height:170px;background:#5a6a9a"></div>
<div class="a" style="left:151px;top:275px;width:1px;height:170px;background:#5a6a9a"></div>
<div class="a" style="left:193px;top:275px;width:1px;height:170px;background:#5a6a9a"></div>
<div class="a" style="left:245px;top:275px;width:1px;height:170px;background:#5a6a9a"></div>
<div class="a" style="left:284px;top:275px;width:1px;height:170px;background:#5a6a9a"></div>
<div class="a" style="left:323px;top:275px;width:1px;height:170px;background:#5a6a9a"></div>
<div class="a" style="left:357px;top:275px;width:1px;height:170px;background:#5a6a9a"></div>
<div class="t" style="left:2px;top:4px">#</div>
<div class="t" style="left:47px;top:4px">time</div>
<div class="t" style="left:120px;top:4px">[s]</div>
<div class="t" style="left:155px;top:4px">[m]</div>
<div class="t" style="left:197px;top:4px">[knots]</div>
<div class="t" style="left:249px;top:4px">+/-</div>
<div class="t" style="left:288px;top:4px">[m/s²]</div>
<div class="t" style="left:327px;top:4px">Sats</div>
<div class="t" style="left:361px;top:4px">HDoP</div>
<div class="t" style="left:2px;top:23px;">11395</div>
<div class="t" style="left:47px;top:23px;">14:09:20.200</div>
<div class="t" style="left:120px;top:23px;">0.200</div>
<div class="t" style="left:161px;top:23px;">3.3</div>
<div class="t" style="left:197px;top:23px;">32.501</div>
<div class="t" style="left:249px;top:23px;">0.253</div>
<div class="t" style="left:291px;top:23px;">0.3</div>
<div class="t" style="left:327px;top:23px;">12</div>
<div class="t" style="left:364px;top:23px;">0.6</div>
<div class="t" style="left:2px;top:40px;">11396</div>
<div class="t" style="left:47px;top:40px;">14:09:20.400</div>
<div class="t" style="left:120px;top:40px;">0.200</div>
<div class="t" style="left:161px;top:40px;">3.3</div>
<div class="t" style="left:197px;top:40px;">31.996</div>
<div class="t" style="left:249px;top:40px;">0.369</div>
<div class="t" style="left:288px;top:40px;">-1.3</div>
<div class="t" style="left:327px;top:40px;">12</div>
<div class="t" style="left:364px;top:40px;">0.6</div>
<div class="t" style="left:2px;top:57px;">11397</div>
<div class="t" style="left:47px;top:57px;">14:09:20.600</div>
<div class="t" style="left:120px;top:57px;">0.200</div>
<div class="t" style="left:161px;top:57px;">3.3</div>
<div class="t" style="left:197px;top:57px;">32.171</div>
<div class="t" style="left:249px;top:57px;">0.175</div>
<div class="t" style="left:291px;top:57px;">0.5</div>
<div class="t" style="left:327px;top:57px;">12</div>
<div class="t" style="left:364px;top:57px;">0.6</div>
<div class="t" style="left:2px;top:74px;">11398</div>
<div class="t" style="left:47px;top:74px;">14:09:20.800</div>
<div class="t" style="left:120px;top:74px;">0.200</div>
<div class="t" style="left:161px;top:74px;">3.3</div>
<div class="t" style="left:197px;top:74px;">32.365</div>
<div class="t" style="left:249px;top:74px;">0.175</div>
<div class="t" style="left:291px;top:74px;">0.5</div>
<div class="t" style="left:327px;top:74px;">12</div>
<div class="t" style="left:364px;top:74px;">0.6</div>
<div class="t" style="left:2px;top:91px;">11399</div>
<div class="t" style="left:47px;top:91px;">14:09:21.000</div>
<div class="t" style="left:120px;top:91px;">0.200</div>
<div class="t" style="left:161px;top:91px;">3.3</div>
<div class="t" style="left:197px;top:91px;">31.898</div>
<div class="t" style="left:249px;top:91px;">0.175</div>
<div class="t" style="left:288px;top:91px;">-1.2</div>
<div class="t" style="left:327px;top:91px;">12</div>
<div class="t" style="left:364px;top:91px;">0.6</div>
<div class="t" style="left:2px;top:108px;">11400</div>
<div class="t" style="left:47px;top:108px;">14:09:21.200</div>
<div class="t" style="left:120px;top:108px;">0.200</div>
<div class="t" style="left:161px;top:108px;">3.3</div>
<div class="t" style="left:197px;top:108px;">32.132</div>
<div class="t" style="left:249px;top:108px;">0.330</div>
<div class="t" style="left:291px;top:108px;">0.6</div>
<div class="t" style="left:327px;top:108px;">12</div>
<div class="t" style="left:364px;top:108px;">0.6</div>
<div class="t" style="left:2px;top:125px;">11401</div>
<div class="t" style="left:47px;top:125px;">14:09:21.400</div>
<div class="t" style="left:120px;top:125px;">0.200</div>
<div class="t" style="left:161px;top:125px;">3.3</div>
<div class="t" style="left:197px;top:125px;">32.171</div>
<div class="t" style="left:249px;top:125px;">0.369</div>
<div class="t" style="left:291px;top:125px;">0.1</div>
<div class="t" style="left:327px;top:125px;">12</div>
<div class="t" style="left:364px;top:125px;">0.6</div>
<div class="t" style="left:2px;top:142px;">11402</div>
<div class="t" style="left:47px;top:142px;">14:09:21.600</div>
<div class="t" style="left:120px;top:142px;">0.200</div>
<div class="t" style="left:161px;top:142px;">3.3</div>
<div class="t" style="left:197px;top:142px;">32.521</div>
<div class="t" style="left:249px;top:142px;">0.369</div>
<div class="t" style="left:291px;top:142px;">0.9</div>
<div class="t" style="left:327px;top:142px;">12</div>
<div class="t" style="left:364px;top:142px;">0.6</div>
<div class="t" style="left:2px;top:159px;">11403</div>
<div class="t" style="left:47px;top:159px;">14:09:21.800</div>
<div class="t" style="left:120px;top:159px;">0.200</div>
<div class="t" style="left:161px;top:159px;">3.4</div>
<div class="t" style="left:197px;top:159px;">32.812</div>
<div class="t" style="left:249px;top:159px;">0.389</div>
<div class="t" style="left:291px;top:159px;">0.7</div>
<div class="t" style="left:327px;top:159px;">12</div>
<div class="t" style="left:364px;top:159px;">0.6</div>
<div class="t" style="left:2px;top:176px;">11404</div>
<div class="t" style="left:47px;top:176px;">14:09:22.000</div>
<div class="t" style="left:120px;top:176px;">0.200</div>
<div class="t" style="left:161px;top:176px;">3.4</div>
<div class="t" style="left:197px;top:176px;">33.317</div>
<div class="t" style="left:249px;top:176px;">0.408</div>
<div class="t" style="left:291px;top:176px;">1.3</div>
<div class="t" style="left:327px;top:176px;">12</div>
<div class="t" style="left:364px;top:176px;">0.6</div>
<div class="t" style="left:2px;top:193px;">11405</div>
<div class="t" style="left:47px;top:193px;">14:09:22.200</div>
<div class="t" style="left:120px;top:193px;">0.200</div>
<div class="t" style="left:161px;top:193px;">3.4</div>
<div class="t" style="left:197px;top:193px;">33.512</div>
<div class="t" style="left:249px;top:193px;">0.194</div>
<div class="t" style="left:291px;top:193px;">0.5</div>
<div class="t" style="left:327px;top:193px;">12</div>
<div class="t" style="left:364px;top:193px;">0.6</div>
<div class="t" style="left:2px;top:210px;">11406</div>
<div class="t" style="left:47px;top:210px;">14:09:22.400</div>
<div class="t" style="left:120px;top:210px;">0.200</div>
<div class="t" style="left:161px;top:210px;">3.4</div>
<div class="t" style="left:197px;top:210px;">32.909</div>
<div class="t" style="left:249px;top:210px;">0.194</div>
<div class="t" style="left:288px;top:210px;">-1.5</div>
<div class="t" style="left:327px;top:210px;">12</div>
<div class="t" style="left:364px;top:210px;">0.6</div>
<div class="t" style="left:2px;top:227px;">11407</div>
<div class="t" style="left:47px;top:227px;">14:09:22.600</div>
<div class="t" style="left:120px;top:227px;">0.200</div>
<div class="t" style="left:161px;top:227px;">3.5</div>
<div class="t" style="left:197px;top:227px;">33.745</div>
<div class="t" style="left:249px;top:227px;">0.194</div>
<div class="t" style="left:291px;top:227px;">2.2</div>
<div class="t" style="left:327px;top:227px;">12</div>
<div class="t" style="left:364px;top:227px;">0.6</div>
<div class="t" style="left:2px;top:244px;">11408</div>
<div class="t" style="left:47px;top:244px;">14:09:22.800</div>
<div class="t" style="left:120px;top:244px;">0.200</div>
<div class="t" style="left:161px;top:244px;">3.5</div>
<div class="t" style="left:197px;top:244px;">33.842</div>
<div class="t" style="left:249px;top:244px;">0.175</div>
<div class="t" style="left:291px;top:244px;">0.2</div>
<div class="t" style="left:327px;top:244px;">12</div>
<div class="t" style="left:364px;top:244px;">0.6</div>
<div class="t" style="left:2px;top:261px;">11409</div>
<div class="t" style="left:47px;top:261px;">14:09:23.000</div>
<div class="t" style="left:120px;top:261px;">0.200</div>
<div class="t" style="left:161px;top:261px;">3.5</div>
<div class="t" style="left:197px;top:261px;">33.862</div>
<div class="t" style="left:249px;top:261px;">0.175</div>
<div class="t" style="left:291px;top:261px;">0.1</div>
<div class="t" style="left:327px;top:261px;">12</div>
<div class="t" style="left:364px;top:261px;">0.6</div>
<div class="t" style="left:2px;top:278px;color:#fff">11410</div>
<div class="t" style="left:47px;top:278px;color:#fff">14:09:23.200</div>
<div class="t" style="left:120px;top:278px;color:#fff">0.200</div>
<div class="t" style="left:161px;top:278px;color:#fff">3.7</div>
<div class="t" style="left:197px;top:278px;color:#fff">36.058</div>
<div class="t" style="left:249px;top:278px;color:#fff">0.214</div>
<div class="t" style="left:291px;top:278px;color:#fff">5.7</div>
<div class="t" style="left:327px;top:278px;color:#fff">12</div>
<div class="t" style="left:364px;top:278px;color:#fff">0.6</div>
<div class="t" style="left:2px;top:295px;color:#fff">11411</div>
<div class="t" style="left:47px;top:295px;color:#fff">14:09:23.400</div>
<div class="t" style="left:120px;top:295px;color:#fff">0.200</div>
<div class="t" style="left:161px;top:295px;color:#fff">3.7</div>
<div class="t" style="left:197px;top:295px;color:#fff">35.864</div>
<div class="t" style="left:249px;top:295px;color:#fff">0.175</div>
<div class="t" style="left:288px;top:295px;color:#fff">-0.5</div>
<div class="t" style="left:327px;top:295px;color:#fff">12</div>
<div class="t" style="left:364px;top:295px;color:#fff">0.6</div>
<div class="t" style="left:2px;top:312px;color:#fff">11412</div>
<div class="t" style="left:47px;top:312px;color:#fff">14:09:23.600</div>
<div class="t" style="left:120px;top:312px;color:#fff">0.200</div>
<div class="t" style="left:161px;top:312px;color:#fff">3.7</div>
<div class="t" style="left:197px;top:312px;color:#fff">35.553</div>
<div class="t" style="left:249px;top:312px;color:#fff">0.175</div>
<div class="t" style="left:288px;top:312px;color:#fff">-0.8</div>
<div class="t" style="left:327px;top:312px;color:#fff">12</div>
<div class="t" style="left:364px;top:312px;color:#fff">0.6</div>
<div class="t" style="left:2px;top:329px;color:#fff">11413</div>
<div class="t" style="left:47px;top:329px;color:#fff">14:09:23.800</div>
<div class="t" style="left:120px;top:329px;color:#fff">0.200</div>
<div class="t" style="left:161px;top:329px;color:#fff">3.8</div>
<div class="t" style="left:197px;top:329px;color:#fff">36.544</div>
<div class="t" style="left:249px;top:329px;color:#fff">0.175</div>
<div class="t" style="left:291px;top:329px;color:#fff">2.5</div>
<div class="t" style="left:327px;top:329px;color:#fff">12</div>
<div class="t" style="left:364px;top:329px;color:#fff">0.6</div>
<div class="t" style="left:2px;top:346px;color:#fff">11414</div>
<div class="t" style="left:47px;top:346px;color:#fff">14:09:24.000</div>
<div class="t" style="left:120px;top:346px;color:#fff">0.200</div>
<div class="t" style="left:161px;top:346px;color:#fff">3.7</div>
<div class="t" style="left:197px;top:346px;color:#fff">36.194</div>
<div class="t" style="left:249px;top:346px;color:#fff">0.136</div>
<div class="t" style="left:288px;top:346px;color:#fff">-0.9</div>
<div class="t" style="left:327px;top:346px;color:#fff">12</div>
<div class="t" style="left:364px;top:346px;color:#fff">0.6</div>
<div class="t" style="left:2px;top:363px;color:#fff">11415</div>
<div class="t" style="left:47px;top:363px;color:#fff">14:09:24.200</div>
<div class="t" style="left:120px;top:363px;color:#fff">0.200</div>
<div class="t" style="left:161px;top:363px;color:#fff">3.8</div>
<div class="t" style="left:197px;top:363px;color:#fff">36.525</div>
<div class="t" style="left:249px;top:363px;color:#fff">0.136</div>
<div class="t" style="left:291px;top:363px;color:#fff">0.8</div>
<div class="t" style="left:327px;top:363px;color:#fff">12</div>
<div class="t" style="left:364px;top:363px;color:#fff">0.6</div>
<div class="t" style="left:2px;top:380px;color:#fff">11416</div>
<div class="t" style="left:47px;top:380px;color:#fff">14:09:24.400</div>
<div class="t" style="left:120px;top:380px;color:#fff">0.200</div>
<div class="t" style="left:161px;top:380px;color:#fff">3.7</div>
<div class="t" style="left:197px;top:380px;color:#fff">36.292</div>
<div class="t" style="left:249px;top:380px;color:#fff">0.117</div>
<div class="t" style="left:288px;top:380px;color:#fff">-0.6</div>
<div class="t" style="left:327px;top:380px;color:#fff">12</div>
<div class="t" style="left:364px;top:380px;color:#fff">0.6</div>
<div class="t" style="left:2px;top:397px;color:#fff">11417</div>
<div class="t" style="left:47px;top:397px;color:#fff">14:09:24.600</div>
<div class="t" style="left:120px;top:397px;color:#fff">0.200</div>
<div class="t" style="left:161px;top:397px;color:#fff">3.7</div>
<div class="t" style="left:197px;top:397px;color:#fff">35.844</div>
<div class="t" style="left:249px;top:397px;color:#fff">0.136</div>
<div class="t" style="left:288px;top:397px;color:#fff">-1.1</div>
<div class="t" style="left:327px;top:397px;color:#fff">12</div>
<div class="t" style="left:364px;top:397px;color:#fff">0.6</div>
<div class="t" style="left:2px;top:414px;color:#fff">11418</div>
<div class="t" style="left:47px;top:414px;color:#fff">14:09:24.800</div>
<div class="t" style="left:120px;top:414px;color:#fff">0.200</div>
<div class="t" style="left:161px;top:414px;color:#fff">3.7</div>
<div class="t" style="left:197px;top:414px;color:#fff">35.786</div>
<div class="t" style="left:249px;top:414px;color:#fff">0.175</div>
<div class="t" style="left:288px;top:414px;color:#fff">-0.2</div>
<div class="t" style="left:327px;top:414px;color:#fff">12</div>
<div class="t" style="left:364px;top:414px;color:#fff">0.6</div>
<div class="t" style="left:2px;top:431px;color:#fff">11419</div>
<div class="t" style="left:47px;top:431px;color:#fff">14:09:25.000</div>
<div class="t" style="left:120px;top:431px;color:#fff">0.200</div>
<div class="t" style="left:161px;top:431px;color:#fff">3.7</div>
<div class="t" style="left:197px;top:431px;color:#fff">35.553</div>
<div class="t" style="left:249px;top:431px;color:#fff">0.175</div>
<div class="t" style="left:288px;top:431px;color:#fff">-0.6</div>
<div class="t" style="left:327px;top:431px;color:#fff">12</div>
<div class="t" style="left:364px;top:431px;color:#fff">0.6</div>
<div class="t" style="left:2px;top:448px;">11420</div>
<div class="t" style="left:47px;top:448px;">14:09:25.200</div>
<div class="t" style="left:120px;top:448px;">0.200</div>
<div class="t" style="left:161px;top:448px;">3.6</div>
<div class="t" style="left:197px;top:448px;">35.106</div>
<div class="t" style="left:249px;top:448px;">0.136</div>
<div class="t" style="left:288px;top:448px;">-1.2</div>
<div class="t" style="left:327px;top:448px;">12</div>
<div class="t" style="left:364px;top:448px;">0.6</div>
<div class="t" style="left:2px;top:465px;">11421</div>
<div class="t" style="left:47px;top:465px;">14:09:25.400</div>
<div class="t" style="left:120px;top:465px;">0.200</div>
<div class="t" style="left:161px;top:465px;">3.6</div>
<div class="t" style="left:197px;top:465px;">34.756</div>
<div class="t" style="left:249px;top:465px;">0.136</div>
<div class="t" style="left:288px;top:465px;">-0.9</div>
<div class="t" style="left:327px;top:465px;">12</div>
<div class="t" style="left:364px;top:465px;">0.6</div>
<div class="t" style="left:2px;top:482px;">11422</div>
<div class="t" style="left:47px;top:482px;">14:09:25.600</div>
<div class="t" style="left:120px;top:482px;">0.200</div>
<div class="t" style="left:161px;top:482px;">3.5</div>
<div class="t" style="left:197px;top:482px;">33.707</div>
<div class="t" style="left:249px;top:482px;">0.117</div>
<div class="t" style="left:288px;top:482px;">-2.7</div>
<div class="t" style="left:327px;top:482px;">12</div>
<div class="t" style="left:364px;top:482px;">0.6</div>
</div>
<div class="trk" style="left:468px;top:159px;width:15px;height:486px"></div>
<div class="sb" style="left:468px;top:159px;width:15px;height:15px"><i></i></div>
<svg class="a" style="left:468px;top:159px" width="15" height="15"><path d="M4.0 9.0 L7.5 5.5 L11.0 9.0Z" fill="#000"/></svg>
<div class="sb" style="left:468px;top:630px;width:15px;height:15px"><i></i></div>
<svg class="a" style="left:468px;top:630px" width="15" height="15"><path d="M4.0 6.0 L7.5 9.5 L11.0 6.0Z" fill="#000"/></svg>
<div class="sb" style="left:468px;top:275px;width:15px;height:23px"><i></i></div>
<div class="trk" style="left:72px;top:645px;width:396px;height:15px"></div>
<div class="sb" style="left:72px;top:645px;width:15px;height:15px"><i></i></div>
<svg class="a" style="left:72px;top:645px" width="15" height="15"><path d="M9.0 4.0 L5.5 7.5 L9.0 11.0Z" fill="#000"/></svg>
<div class="sb" style="left:453px;top:645px;width:15px;height:15px"><i></i></div>
<svg class="a" style="left:453px;top:645px" width="15" height="15"><path d="M6.0 4.0 L9.5 7.5 L6.0 11.0Z" fill="#000"/></svg>
<div class="sb" style="left:87px;top:645px;width:242px;height:15px"><i></i></div>
<div class="a" style="left:468px;top:645px;width:15px;height:15px;background:#d4d0c8;"></div>
<div class="cb" style="left:78px;top:668px"><i></i></div>
<div class="t" style="left:97px;top:670px;letter-spacing:-0.42px;">Filters</div>
<div class="sunk" style="left:132px;top:667px;width:120px;height:20px"></div>
<div class="t" style="left:136px;top:671px;letter-spacing:-0.22px;">51min, 30.748km</div>
<div class="sunk" style="left:259px;top:667px;width:97px;height:20px"></div>
<div class="t" style="left:262px;top:671px;letter-spacing:-0.27px;">V1.2G0529C</div>
<div class="btn" style="left:364px;top:667px;width:120px;height:20px"><i></i></div>
<div class="t" style="left:376px;top:671px;letter-spacing:-0.09px;color:#808080;text-shadow:1px 1px 0 #fff">Delete Trackpoint(s)</div>
<div class="a" style="left:70px;top:697px;width:414px;height:304px;border:1px solid #808080;box-shadow:inset 1px 1px 0 #fff, 1px 1px 0 #fff"></div>
<div class="a" style="left:75px;top:692px;width:35px;height:12px;background:#d4d0c8;"></div>
<div class="t" style="left:77px;top:692px;letter-spacing:-0.20px;">Results</div>
<div class="rb" style="left:80px;top:709px;"><div class="a" style="left:3px;top:3px;width:4px;height:4px;border-radius:50%;background:#000"></div></div>
<div class="t" style="left:97px;top:709px;letter-spacing:-0.14px;">2sec</div>
<div class="rb" style="left:144px;top:709px;"></div>
<div class="t" style="left:161px;top:709px;letter-spacing:-0.30px;">10sec</div>
<div class="rb" style="left:216px;top:709px;"></div>
<div class="t" style="left:233px;top:709px;letter-spacing:-0.30px;">20sec</div>
<div class="rb" style="left:284px;top:709px;"></div>
<div class="t" style="left:301px;top:709px;letter-spacing:-0.29px;">1hour</div>
<div class="rb" style="left:350px;top:709px;"></div>
<div class="t" style="left:367px;top:709px;letter-spacing:-0.35px;">12hrs</div>
<div class="rb" style="left:417px;top:709px;"></div>
<div class="t" style="left:434px;top:709px;letter-spacing:-0.41px;">24hrs</div>
<div class="rb" style="left:80px;top:732px;"></div>
<div class="t" style="left:97px;top:732px;letter-spacing:-0.43px;">100m</div>
<div class="rb" style="left:144px;top:732px;"></div>
<div class="t" style="left:161px;top:732px;letter-spacing:-0.43px;">250m</div>
<div class="rb" style="left:216px;top:732px;"></div>
<div class="t" style="left:233px;top:732px;letter-spacing:-0.43px;">500m</div>
<div class="rb" style="left:284px;top:732px;"></div>
<div class="t" style="left:301px;top:732px;letter-spacing:-0.43px;">1852m</div>
<div class="rb" style="left:350px;top:732px;"></div>
<div class="rb" style="left:417px;top:732px;"></div>
<div class="rb" style="left:80px;top:755px;"></div>
<div class="t" style="left:97px;top:755px;letter-spacing:-0.21px;">@250</div>
<div class="rb" style="left:144px;top:755px;"></div>
<div class="t" style="left:161px;top:755px;letter-spacing:-0.21px;">@500</div>
<div class="rb" style="left:216px;top:755px;"></div>
<div class="t" style="left:233px;top:755px;letter-spacing:-0.16px;">@1km</div>
<div class="rb" style="left:284px;top:755px;"></div>
<div class="t" style="left:301px;top:755px;letter-spacing:-0.59px;">Maximum</div>
<div class="rb" style="left:417px;top:755px;background:#d4d0c8;"></div>
<div class="t" style="left:434px;top:755px;letter-spacing:-0.34px;color:#808080;text-shadow:1px 1px 0 #fff">Gates</div>
<div class="sunk2" style="left:364px;top:728px;width:45px;height:20px"><i></i></div>
<div class="t" style="left:368px;top:731px;letter-spacing:-0.41px;">1000m</div>
<div class="sunk2" style="left:432px;top:728px;width:45px;height:20px"><i></i></div>
<div class="t" style="left:435px;top:731px;letter-spacing:-0.28px;">360min</div>
<div class="cb" style="left:78px;top:777px"><i></i><svg class="a" style="left:2px;top:2px" width="9" height="9" viewBox="0 0 9 9"><path d="M1 3.5 L3.5 6 L8 1.5" fill="none" stroke="#000" stroke-width="2"/></svg></div>
<div class="t" style="left:97px;top:779px;letter-spacing:-0.29px;">Doppler</div>
<div class="cb" style="left:142px;top:777px"><i></i></div>
<div class="t" style="left:161px;top:779px;letter-spacing:-0.21px;">Projection</div>
<div class="cb" style="left:214px;top:777px"><i></i></div>
<div class="t" style="left:233px;top:779px;letter-spacing:-0.24px;">Interpolation</div>
<div class="cb" style="left:298px;top:777px"><i></i></div>
<div class="t" style="left:316px;top:779px;letter-spacing:-0.03px;">Altitude</div>
<div class="cb dis" style="left:360px;top:777px"><i></i></div>
<div class="t" style="left:379px;top:779px;letter-spacing:-0.42px;color:#808080;text-shadow:1px 1px 0 #fff">Constrain</div>
<div class="cb" style="left:429px;top:777px"><i></i><svg class="a" style="left:2px;top:2px" width="9" height="9" viewBox="0 0 9 9"><path d="M1 3.5 L3.5 6 L8 1.5" fill="none" stroke="#000" stroke-width="2"/></svg></div>
<div class="t" style="left:448px;top:779px;letter-spacing:0.17px;">1/Leg</div>
<div class="sunk2" style="left:73px;top:797px;width:410px;height:177px"><i></i></div>
<div class="a" style="left:75px;top:799px;width:391px;height:158px;overflow:hidden;background:#fff">
<div class="a" style="left:0;top:0;width:391px;height:19px;background:#c8c8c8;border-bottom:1px solid #808080"></div>
<div class="a" style="left:26px;top:0;width:1px;height:158px;background:#c0c8d4"></div>
<div class="a" style="left:25px;top:0;width:2px;height:19px;background:#808080;border-right:1px solid #fff"></div>
<div class="a" style="left:79px;top:0;width:1px;height:158px;background:#c0c8d4"></div>
<div class="a" style="left:78px;top:0;width:2px;height:19px;background:#808080;border-right:1px solid #fff"></div>
<div class="a" style="left:124px;top:0;width:1px;height:158px;background:#c0c8d4"></div>
<div class="a" style="left:123px;top:0;width:2px;height:19px;background:#808080;border-right:1px solid #fff"></div>
<div class="a" style="left:172px;top:0;width:1px;height:158px;background:#c0c8d4"></div>
<div class="a" style="left:171px;top:0;width:2px;height:19px;background:#808080;border-right:1px solid #fff"></div>
<div class="a" style="left:217px;top:0;width:1px;height:158px;background:#c0c8d4"></div>
<div class="a" style="left:216px;top:0;width:2px;height:19px;background:#808080;border-right:1px solid #fff"></div>
<div class="a" style="left:262px;top:0;width:1px;height:158px;background:#c0c8d4"></div>
<div class="a" style="left:261px;top:0;width:2px;height:19px;background:#808080;border-right:1px solid #fff"></div>
<div class="a" style="left:307px;top:0;width:1px;height:158px;background:#c0c8d4"></div>
<div class="a" style="left:306px;top:0;width:2px;height:19px;background:#808080;border-right:1px solid #fff"></div>
<div class="a" style="left:352px;top:0;width:1px;height:158px;background:#c0c8d4"></div>
<div class="a" style="left:351px;top:0;width:2px;height:19px;background:#808080;border-right:1px solid #fff"></div>
<div class="a" style="left:0;top:20px;width:391px;height:17px;background:#0a246a"></div>
<div class="a" style="left:26px;top:20px;width:1px;height:17px;background:#5a6a9a"></div>
<div class="a" style="left:79px;top:20px;width:1px;height:17px;background:#5a6a9a"></div>
<div class="a" style="left:124px;top:20px;width:1px;height:17px;background:#5a6a9a"></div>
<div class="a" style="left:172px;top:20px;width:1px;height:17px;background:#5a6a9a"></div>
<div class="a" style="left:217px;top:20px;width:1px;height:17px;background:#5a6a9a"></div>
<div class="a" style="left:262px;top:20px;width:1px;height:17px;background:#5a6a9a"></div>
<div class="a" style="left:307px;top:20px;width:1px;height:17px;background:#5a6a9a"></div>
<div class="a" style="left:352px;top:20px;width:1px;height:17px;background:#5a6a9a"></div>
<div class="t" style="left:3px;top:5px">#</div>
<div class="t" style="left:30px;top:5px">time</div>
<div class="t" style="left:83px;top:5px">[m]</div>
<div class="t" style="left:128px;top:5px">[knots]</div>
<div class="t" style="left:176px;top:5px">+/-</div>
<div class="t" style="left:221px;top:5px"><span style="letter-spacing:-0.6px">mSDoP</span></div>
<div class="t" style="left:266px;top:5px">min</div>
<div class="t" style="left:311px;top:5px">max</div>
<div class="t" style="left:356px;top:5px">mSats</div>
<div class="t" style="left:3px;top:24px;color:#fff">1</div>
<div class="t" style="left:30px;top:24px;color:#fff">14:09:25</div>
<div class="t" style="left:85px;top:24px;color:#fff">37.1</div>
<div class="t" style="left:128px;top:24px;color:#fff">36.021</div>
<div class="t" style="left:178px;top:24px;color:#fff">0.161</div>
<div class="t" style="left:223px;top:24px;color:#fff">0.214</div>
<div class="t" style="left:266px;top:24px;color:#fff">35.553</div>
<div class="t" style="left:311px;top:24px;color:#fff">36.544</div>
<div class="t" style="left:356px;top:24px;color:#fff">12</div>
<div class="t" style="left:3px;top:41px;">2</div>
<div class="t" style="left:30px;top:41px;">13:56:07</div>
<div class="t" style="left:85px;top:41px;">37.1</div>
<div class="t" style="left:128px;top:41px;">36.014</div>
<div class="t" style="left:178px;top:41px;">0.130</div>
<div class="t" style="left:223px;top:41px;">0.136</div>
<div class="t" style="left:266px;top:41px;">35.495</div>
<div class="t" style="left:311px;top:41px;">36.525</div>
<div class="t" style="left:356px;top:41px;">11</div>
<div class="t" style="left:3px;top:58px;">3</div>
<div class="t" style="left:30px;top:58px;">13:38:44</div>
<div class="t" style="left:85px;top:58px;">36.7</div>
<div class="t" style="left:128px;top:58px;">35.666</div>
<div class="t" style="left:178px;top:58px;">0.126</div>
<div class="t" style="left:223px;top:58px;">0.194</div>
<div class="t" style="left:266px;top:58px;">35.242</div>
<div class="t" style="left:311px;top:58px;">35.981</div>
<div class="t" style="left:356px;top:58px;">11</div>
<div class="t" style="left:3px;top:75px;">4</div>
<div class="t" style="left:30px;top:75px;">14:33:29</div>
<div class="t" style="left:85px;top:75px;">36.4</div>
<div class="t" style="left:128px;top:75px;">35.355</div>
<div class="t" style="left:178px;top:75px;">0.233</div>
<div class="t" style="left:223px;top:75px;">0.330</div>
<div class="t" style="left:266px;top:75px;">34.581</div>
<div class="t" style="left:311px;top:75px;">35.961</div>
<div class="t" style="left:356px;top:75px;">9</div>
<div class="t" style="left:3px;top:92px;">5</div>
<div class="t" style="left:30px;top:92px;">14:02:44</div>
<div class="t" style="left:85px;top:92px;">36.2</div>
<div class="t" style="left:128px;top:92px;">35.195</div>
<div class="t" style="left:178px;top:92px;">0.387</div>
<div class="t" style="left:223px;top:92px;">0.778</div>
<div class="t" style="left:266px;top:92px;">34.484</div>
<div class="t" style="left:311px;top:92px;">36.428</div>
<div class="t" style="left:356px;top:92px;">11</div>
<div class="t" style="left:3px;top:109px;">6</div>
<div class="t" style="left:30px;top:109px;">14:21:59</div>
<div class="t" style="left:85px;top:109px;">36.1</div>
<div class="t" style="left:128px;top:109px;">35.084</div>
<div class="t" style="left:178px;top:109px;">0.311</div>
<div class="t" style="left:223px;top:109px;">0.486</div>
<div class="t" style="left:266px;top:109px;">34.387</div>
<div class="t" style="left:311px;top:109px;">35.708</div>
<div class="t" style="left:356px;top:109px;">10</div>
<div class="t" style="left:3px;top:126px;">7</div>
<div class="t" style="left:30px;top:126px;">13:05:22</div>
<div class="t" style="left:85px;top:126px;">35.6</div>
<div class="t" style="left:128px;top:126px;">34.604</div>
<div class="t" style="left:178px;top:126px;">0.212</div>
<div class="t" style="left:223px;top:126px;">0.311</div>
<div class="t" style="left:266px;top:126px;">33.920</div>
<div class="t" style="left:311px;top:126px;">35.300</div>
<div class="t" style="left:356px;top:126px;">9</div>
<div class="t" style="left:3px;top:143px;">8</div>
<div class="t" style="left:30px;top:143px;">13:33:25</div>
<div class="t" style="left:85px;top:143px;">35.6</div>
<div class="t" style="left:128px;top:143px;">34.571</div>
<div class="t" style="left:178px;top:143px;">0.231</div>
<div class="t" style="left:223px;top:143px;">0.253</div>
<div class="t" style="left:266px;top:143px;">34.017</div>
<div class="t" style="left:311px;top:143px;">35.164</div>
<div class="t" style="left:356px;top:143px;">10</div>
<div class="t" style="left:3px;top:160px;">9</div>
<div class="t" style="left:30px;top:160px;">13:45:11</div>
<div class="t" style="left:85px;top:160px;">35.5</div>
<div class="t" style="left:128px;top:160px;">34.500</div>
<div class="t" style="left:178px;top:160px;">0.200</div>
<div class="t" style="left:223px;top:160px;">0.250</div>
<div class="t" style="left:266px;top:160px;">34.000</div>
<div class="t" style="left:311px;top:160px;">35.100</div>
<div class="t" style="left:356px;top:160px;">10</div>
</div>
<div class="trk" style="left:466px;top:799px;width:15px;height:158px"></div>
<div class="sb" style="left:466px;top:799px;width:15px;height:15px"><i></i></div>
<svg class="a" style="left:466px;top:799px" width="15" height="15"><path d="M4.0 9.0 L7.5 5.5 L11.0 9.0Z" fill="#000"/></svg>
<div class="sb" style="left:466px;top:942px;width:15px;height:15px"><i></i></div>
<svg class="a" style="left:466px;top:942px" width="15" height="15"><path d="M4.0 6.0 L7.5 9.5 L11.0 6.0Z" fill="#000"/></svg>
<div class="sb" style="left:466px;top:814px;width:15px;height:104px"><i></i></div>
<div class="trk" style="left:75px;top:957px;width:391px;height:15px"></div>
<div class="sb" style="left:75px;top:957px;width:15px;height:15px"><i></i></div>
<svg class="a" style="left:75px;top:957px" width="15" height="15"><path d="M9.0 4.0 L5.5 7.5 L9.0 11.0Z" fill="#000"/></svg>
<div class="sb" style="left:451px;top:957px;width:15px;height:15px"><i></i></div>
<svg class="a" style="left:451px;top:957px" width="15" height="15"><path d="M6.0 4.0 L9.5 7.5 L6.0 11.0Z" fill="#000"/></svg>
<div class="sb" style="left:90px;top:957px;width:294px;height:15px"><i></i></div>
<div class="a" style="left:466px;top:957px;width:15px;height:15px;background:#d4d0c8;"></div>
<div class="sunk" style="left:76px;top:978px;width:42px;height:20px"></div>
<div class="t" style="left:85px;top:982px;">10</div>
<div class="btn" style="left:105px;top:980px;width:12px;height:8px"><i></i></div>
<svg class="a" style="left:105px;top:980px" width="12" height="8"><path d="M3.0 5.5 L6.0 2.5 L9.0 5.5Z" fill="#000"/></svg>
<div class="btn" style="left:105px;top:988px;width:12px;height:8px"><i></i></div>
<svg class="a" style="left:105px;top:988px" width="12" height="8"><path d="M3.0 2.5 L6.0 5.5 L9.0 2.5Z" fill="#000"/></svg>
<div class="t" style="left:124px;top:982px;">rows</div>
<div class="t" style="left:169px;top:982px;">Avg 2:</div>
<div class="sunk" style="left:207px;top:979px;width:53px;height:19px"></div>
<div class="t" style="left:210px;top:982px;">36.017</div>
<div class="t" style="left:276px;top:982px;">Avg 3:</div>
<div class="sunk" style="left:313px;top:979px;width:53px;height:19px"></div>
<div class="t" style="left:316px;top:982px;">35.900</div>
<div class="t" style="left:382px;top:982px;">Avg 5:</div>
<div class="sunk" style="left:420px;top:979px;width:53px;height:19px"></div>
<div class="t" style="left:423px;top:982px;">35.650</div>
<div class="t" style="left:68px;top:1011px;">21.06.2015 14:09:20 59.256km/h 31.996knots 32.00Doppler&nbsp; 0.6HDoP 12Sats</div>
<div class="a" style="left:489px;top:44px;width:790px;height:1px;background:#808080;"></div>
<div class="a" style="left:489px;top:45px;width:788px;height:586px;background:#dcdcdc;border:1px solid #000;overflow:hidden">
<svg class="a" style="left:0;top:0" width="786" height="584" viewBox="0 0 786 584" fill="none" stroke-linejoin="round">
<path d="M61.4 0.0 C69.5 15.8 94.8 67.0 110.0 95.0 C125.2 123.0 137.5 143.7 152.5 168.0 C167.5 192.3 186.6 220.8 200.0 241.0 C213.4 261.2 227.5 281.0 233.0 289.0" stroke="#f4ee62" stroke-width="1.6"/>
<path d="M233.0 289.0 C240.2 296.8 261.5 320.8 276.5 336.0 C291.5 351.2 303.2 365.0 323.0 380.0 C342.8 395.0 368.2 410.0 395.0 426.0 C421.8 442.0 453.7 460.3 484.0 476.0 C514.3 491.7 545.8 507.5 577.0 520.0 C608.2 532.5 636.2 542.7 671.0 551.0 C705.8 559.3 766.8 566.8 786.0 570.0" stroke="#f0f090" stroke-width="1.3"/>
<path d="M90.0 0.0 C105.7 8.5 155.3 35.3 184.0 51.0 C212.7 66.7 232.2 76.9 262.0 94.0 C291.8 111.1 329.6 136.8 362.6 153.5 C395.6 170.2 429.4 178.9 460.0 194.0 C490.6 209.1 519.3 227.7 546.0 244.0 C572.7 260.3 594.0 275.7 620.0 292.0 C646.0 308.3 674.3 324.3 702.0 342.0 C729.7 359.7 772.0 388.7 786.0 398.0" stroke="#e3a542" stroke-width="1"/>
<path d="M170.0 0.0 C175.0 4.2 186.5 13.7 200.0 25.4 C213.5 37.1 236.6 56.3 250.8 70.2 C265.0 84.1 273.5 94.6 285.4 108.8 C297.3 123.0 311.2 141.3 322.0 155.5 C332.8 169.7 339.1 179.6 350.4 194.0 C361.7 208.4 377.1 226.3 390.0 242.0 C402.9 257.7 412.3 267.2 428.0 288.0 C443.7 308.8 467.0 340.8 484.0 367.0 C501.0 393.2 514.5 418.0 530.0 445.0 C545.5 472.0 565.0 505.8 577.0 529.0 C589.0 552.2 597.8 574.8 602.0 584.0" stroke="#f4ee62" stroke-width="1.4"/>
<path d="M187.4 0.0 C189.5 0.8 191.1 -2.6 200.0 5.0 C208.9 12.6 226.5 31.5 240.7 45.8 C254.9 60.0 268.5 74.6 285.4 90.5 C302.3 106.4 322.6 126.1 342.3 141.3 C361.9 156.6 381.2 167.9 403.3 182.0 C425.4 196.1 449.7 206.5 475.0 226.0 C500.3 245.5 529.2 277.3 555.0 299.0 C580.8 320.7 609.2 338.2 630.0 356.0 C650.8 373.8 661.7 387.2 680.0 406.0 C698.3 424.8 722.3 449.3 740.0 469.0 C757.7 488.7 778.3 514.8 786.0 524.0" stroke="#f4ee62" stroke-width="1.4"/>
<path d="M189.5 0.0 C191.2 1.5 181.3 -6.9 200.0 9.2 C218.7 25.3 271.1 71.2 301.6 96.6 C332.1 122.0 361.0 145.4 383.0 161.6 C405.0 177.8 414.6 181.3 433.8 194.0 C453.0 206.7 477.8 221.7 498.0 238.0 C518.2 254.3 534.0 274.2 555.0 292.0 C576.0 309.8 604.7 328.3 624.0 345.0 C643.3 361.7 652.8 373.8 671.0 392.0 C689.2 410.2 713.8 433.7 733.0 454.0 C752.2 474.3 777.2 504.0 786.0 514.0" stroke="#dd8a3a" stroke-width="1"/>
<path d="M283.4 0.0 C289.8 5.6 307.1 20.2 322.0 33.6 C336.9 47.0 355.9 65.1 372.8 80.3 C389.7 95.5 409.1 112.8 423.6 125.0 C438.1 137.2 449.9 144.7 460.0 153.5 C470.1 162.3 462.3 156.2 484.0 178.0 C505.7 199.8 564.0 256.7 590.0 284.0 C616.0 311.3 621.3 320.8 640.0 342.0 C658.7 363.2 683.8 391.8 702.0 411.0 C720.2 430.2 735.0 442.0 749.0 457.5 C763.0 473.0 779.8 496.2 786.0 504.0" stroke="#f4ee62" stroke-width="1.5"/>
<path d="M299.6 0.0 C310.1 6.3 341.9 25.9 362.6 37.6 C383.3 49.3 408.6 62.4 423.6 70.2 C438.6 78.0 435.6 75.4 452.4 84.5 C469.1 93.6 498.1 109.9 524.1 125.0 C550.1 140.1 578.8 157.2 608.4 174.9 C638.1 192.6 672.4 213.8 702.0 231.1 C731.6 248.4 772.0 270.6 786.0 278.5" stroke="#e0652a" stroke-width="1"/>
<path d="M297.6 0.0 C305.1 1.9 324.7 6.3 342.3 11.2 C359.9 16.1 383.7 22.4 403.3 29.5 C422.9 36.6 440.4 46.0 460.0 53.9 C479.6 61.8 491.1 64.3 521.0 76.7 C550.9 89.1 595.4 106.7 639.6 128.1 C683.8 149.5 761.6 192.2 786.0 205.0" stroke="#f0f090" stroke-width="1.3"/>
<path d="M336.2 0.0 C344.0 4.2 368.4 16.1 383.0 25.4 C397.6 34.7 411.6 46.0 423.6 55.9 C435.6 65.8 438.8 67.2 455.0 85.0 C471.2 102.8 491.3 127.7 521.0 162.5 C550.7 197.3 601.8 257.9 633.3 294.0 C664.8 330.1 684.5 351.5 710.0 379.0 C735.5 406.5 773.3 445.7 786.0 459.0" stroke="#f0f090" stroke-width="1.2"/>
<path d="M356.5 0.0 C364.3 5.6 386.0 20.5 403.3 33.6 C420.5 46.6 439.9 63.1 460.0 78.3 C480.1 93.5 506.6 109.9 524.0 125.0 C541.5 140.1 546.5 151.0 564.7 168.7 C582.9 186.4 612.5 210.4 633.3 231.0 C654.1 251.6 672.9 273.5 689.5 292.0 C706.1 310.5 716.9 320.7 733.0 342.0 C749.1 363.3 777.2 407.0 786.0 420.0" stroke="#f4ee62" stroke-width="1.3"/>
<path d="M378.9 0.0 C384.7 6.6 404.9 30.8 413.5 39.7 C422.1 48.6 416.3 41.2 430.6 53.3 C444.9 65.4 474.8 89.1 499.2 112.5 C523.6 135.9 550.4 164.3 577.2 193.7 C604.0 223.1 636.6 262.7 660.0 289.0 C683.4 315.3 696.6 327.0 717.6 351.4 C738.6 375.8 774.6 421.6 786.0 435.6" stroke="#e3a542" stroke-width="1"/>
<path d="M399.4 0.0 C408.2 8.9 431.6 31.4 452.4 53.3 C473.2 75.2 502.2 105.8 524.0 131.3 C545.8 156.8 560.4 179.3 583.4 206.1 C606.4 232.9 637.1 264.0 662.0 292.0 C686.9 320.0 712.3 348.7 733.0 374.0 C753.7 399.3 777.2 432.3 786.0 444.0" stroke="#dd8a3a" stroke-width="1"/>
<path d="M427.4 0.0 C443.5 13.0 493.9 53.2 524.1 78.2 C554.3 103.2 578.8 124.5 608.4 150.0 C638.1 175.5 673.9 207.0 702.0 231.0 C730.1 255.0 762.8 282.0 776.8 294.0 C790.8 306.0 784.5 301.5 786.0 303.0" stroke="#e3a542" stroke-width="1"/>
<path d="M550.7 0.0 C570.7 15.6 631.6 65.1 670.8 93.8 C710.0 122.6 766.8 159.4 786.0 172.5" stroke="#e0652a" stroke-width="1"/>
<path d="M727.2 0.0 C733.1 4.0 753.0 16.9 762.8 24.0 C772.6 31.1 782.1 39.3 786.0 42.4" stroke="#e3a542" stroke-width="1"/>
<path d="M0.0 48.2 C14.3 57.8 62.8 89.1 86.0 105.5 C109.2 121.9 116.8 132.0 139.3 146.5 C161.8 161.0 192.8 176.7 221.2 192.6 C249.7 208.5 278.8 224.9 310.0 242.0 C341.2 259.1 384.5 281.6 408.7 295.2 C433.0 308.8 437.8 311.9 455.5 323.3 C473.2 334.8 491.9 348.8 514.8 363.9 C537.7 379.0 566.8 397.7 592.8 413.8 C618.8 429.9 647.4 447.6 670.8 460.6 C694.2 473.6 714.0 481.9 733.2 491.8 C752.4 501.7 777.2 515.3 786.0 520.0" stroke="#e3a542" stroke-width="1"/>
<path d="M0.0 5.1 C9.9 12.3 40.3 32.5 59.4 48.2 C78.5 63.9 96.9 82.0 114.7 99.4 C132.5 116.8 152.0 137.3 166.2 152.7 C180.4 168.1 182.7 169.1 200.0 191.8 C217.3 214.5 252.0 262.9 270.0 289.0 C287.9 315.1 296.2 330.1 307.7 348.4 C319.2 366.6 324.4 377.6 339.0 398.5 C353.6 419.4 379.7 452.2 395.0 473.5 C410.3 494.8 417.4 507.6 430.6 526.0 C443.8 544.4 466.9 574.3 474.2 584.0" stroke="#f0f090" stroke-width="1.3"/>
<path d="M0.0 29.7 C10.2 38.9 42.4 67.6 61.5 85.0 C80.6 102.4 101.5 122.3 114.7 134.2 C127.9 146.1 127.3 145.0 140.8 156.6 C154.3 168.2 177.3 188.1 195.5 203.5 C213.7 218.9 230.2 234.8 250.0 249.0 C269.8 263.2 289.8 272.9 314.0 289.0 C338.2 305.1 369.3 327.1 395.0 345.3 C420.7 363.5 445.4 381.6 468.0 398.2 C490.6 414.8 507.0 425.8 530.4 445.0 C553.8 464.2 582.4 492.8 608.4 513.6 C634.4 534.4 670.3 558.1 686.4 569.8 C702.5 581.5 701.9 581.6 705.0 584.0" stroke="#f0f090" stroke-width="1.2"/>
<path d="M0.0 109.6 C16.3 118.1 64.5 144.8 97.8 160.5 C131.1 176.2 165.5 188.8 200.0 203.5 C234.5 218.2 273.3 236.1 305.0 248.5 C336.7 260.9 365.5 269.8 390.0 278.0 C414.5 286.2 420.8 290.5 452.0 297.5 C483.2 304.5 535.3 311.1 577.0 320.0 C618.7 328.9 667.2 342.3 702.0 351.0 C736.8 359.7 772.0 368.5 786.0 372.0" stroke="#f6f6e6" stroke-width="1"/>
<path d="M0.0 137.0 C11.4 143.5 50.1 164.5 68.4 176.1 C86.6 187.7 98.1 199.2 109.5 206.4 C120.9 213.6 127.4 215.0 136.9 219.1 C146.3 223.2 155.7 227.1 166.2 230.9 C176.7 234.6 187.2 237.6 200.0 241.6 C212.8 245.6 228.0 250.6 243.0 254.7 C258.0 258.8 274.5 262.4 290.0 266.0 C305.5 269.6 317.9 272.6 336.0 276.4 C354.1 280.2 379.1 285.4 398.5 288.9 C417.9 292.4 422.7 291.8 452.5 297.5 C482.3 303.2 535.6 313.2 577.2 323.0 C618.8 332.8 667.2 346.3 702.0 356.0 C736.8 365.7 772.0 376.8 786.0 381.0" stroke="#f6f6e6" stroke-width="1"/>
<path d="M0.0 152.7 C8.1 156.9 31.3 169.2 48.9 178.0 C66.5 186.8 87.1 196.1 105.6 205.4 C124.1 214.7 142.6 225.9 160.0 234.0 C177.4 242.1 191.7 247.5 210.0 254.0 C228.3 260.5 249.5 267.2 270.0 273.0 C290.5 278.8 312.0 283.2 332.8 289.0 C353.6 294.8 364.7 300.5 395.0 307.8 C425.3 315.1 474.0 324.1 514.8 332.7 C555.6 341.3 594.4 350.6 639.6 359.2 C684.8 367.8 761.6 379.9 786.0 384.0" stroke="#f6f6e6" stroke-width="1"/>
<path d="M0.0 154.6 C13.0 166.0 53.0 200.6 78.2 223.0 C103.4 245.4 126.3 267.6 151.0 289.0 C175.7 310.4 200.3 330.6 226.4 351.5 C252.5 372.4 279.6 393.2 307.7 414.1 C335.8 435.0 370.9 461.6 395.0 476.6 C419.1 491.6 427.2 494.5 452.4 504.3 C477.6 514.1 514.8 526.7 546.0 535.5 C577.2 544.3 613.6 551.6 639.6 557.3 C665.6 563.0 677.6 565.4 702.0 569.8 C726.4 574.2 772.0 581.5 786.0 583.8" stroke="#f6f6e6" stroke-width="1"/>
<path d="M0.0 150.0 C11.7 161.0 45.8 192.8 70.0 216.0 C94.2 239.2 121.1 268.0 145.1 289.0 C169.1 310.0 192.0 325.0 213.9 342.2 C235.8 359.4 255.7 376.6 276.5 392.2 C297.4 407.8 319.2 422.4 339.0 436.0 C358.8 449.6 378.7 462.6 395.0 473.5 C411.3 484.4 416.8 482.7 436.8 501.1 C456.8 519.5 501.8 570.2 514.8 584.0" stroke="#f6f6e6" stroke-width="1"/>
<path d="M0.0 158.5 C9.8 168.6 39.2 200.5 58.7 219.1 C78.3 237.7 103.7 257.9 117.3 270.0 C130.8 282.1 123.9 276.9 140.0 292.0 C156.1 307.1 191.1 340.5 213.9 360.9 C236.6 381.2 255.7 396.9 276.5 414.1 C297.4 431.3 319.2 448.6 339.0 464.1 C358.8 479.6 380.7 493.7 395.0 507.0 C409.3 520.3 415.4 531.2 425.0 544.0 C434.6 556.8 447.8 577.3 452.4 584.0" stroke="#f0f090" stroke-width="1.3"/>
<path d="M0.0 166.3 C9.8 177.7 40.3 214.0 58.7 234.8 C77.2 255.6 88.0 266.3 110.7 291.0 C133.5 315.7 172.8 360.2 195.2 382.8 C217.6 405.4 226.5 414.1 245.2 426.6 C264.0 439.1 282.7 447.0 307.7 457.9 C332.7 468.8 365.7 481.1 395.0 492.0 C424.3 502.9 453.2 513.7 483.6 523.0 C514.0 532.3 546.0 540.2 577.2 548.0 C608.4 555.8 643.7 563.8 670.8 569.8 C697.9 575.8 728.5 581.6 740.0 584.0" stroke="#f4ee62" stroke-width="1.4"/>
<path d="M0.0 189.8 C9.8 199.2 41.4 229.6 58.7 246.5 C76.0 263.4 83.4 269.9 104.0 291.0 C124.6 312.1 159.1 347.7 182.6 373.4 C206.1 399.1 224.4 421.9 245.2 445.4 C266.1 468.9 285.3 491.1 307.7 514.2 C330.1 537.3 367.7 572.4 379.7 584.0" stroke="#f4ee62" stroke-width="1.4"/>
<path d="M0.0 162.4 C13.0 175.1 57.1 217.6 78.2 238.7 C99.3 259.8 106.4 268.6 126.4 289.0 C146.4 309.4 175.9 336.4 198.3 360.9 C220.7 385.4 239.9 409.9 260.8 436.0 C281.6 462.1 303.6 492.6 323.4 517.3 C343.2 542.0 370.3 572.9 379.7 584.0" stroke="#f0f090" stroke-width="1.3"/>
<path d="M108.5 206.4 C113.2 208.5 127.3 215.0 136.9 219.1 C146.5 223.2 155.7 227.1 166.2 230.9 C176.7 234.6 187.2 237.6 200.0 241.6 C212.8 245.6 228.0 250.6 243.0 254.7 C258.0 258.8 274.5 262.4 290.0 266.0 C305.5 269.6 317.9 272.6 336.0 276.4 C354.1 280.2 379.1 285.4 398.5 288.9 C417.9 292.4 443.5 296.1 452.5 297.5" stroke="#0c8c0c" stroke-width="2"/>
</svg>
<div class="t" style="left:131px;top:210px;font-weight:bold;font-size:13px;letter-spacing:0.4px;color:#1cac1c">36.058</div>
<div class="t" style="left:525px;top:568px;font-weight:bold;font-size:13.5px;line-height:15px;height:15px;color:#000;letter-spacing:0.5px">3D <span style="color:#1ea024">01 03 04 06 07 09 10 11 16 17 23 32</span></div>
</div>
<div class="a" style="left:1277px;top:44px;width:2px;height:590px;background:#e8e6e0;"></div>
<div class="a" style="left:489px;top:633px;width:788px;height:309px;background:#dcdcdc;border:1px solid #000;overflow:hidden">
<svg class="a" style="left:0;top:0" width="786" height="307" viewBox="490 634 786 307" fill="none">
<rect x="856" y="634" width="59" height="307" fill="#00c8c8"/>
<rect x="491.5" y="635.5" width="783" height="304" stroke="#000" stroke-width="1" stroke-dasharray="1 1" shape-rendering="crispEdges"/>
<line x1="492" x2="1275" y1="647.5" y2="647.5" stroke="#000" stroke-width="1" stroke-dasharray="3 3" stroke-dashoffset="2" shape-rendering="crispEdges"/>
<line x1="492" x2="1275" y1="731.5" y2="731.5" stroke="#000" stroke-width="1" stroke-dasharray="3 3" stroke-dashoffset="2" shape-rendering="crispEdges"/>
<line x1="492" x2="1275" y1="816.5" y2="816.5" stroke="#000" stroke-width="1" stroke-dasharray="3 3" stroke-dashoffset="2" shape-rendering="crispEdges"/>
<line x1="492" x2="1275" y1="900.5" y2="900.5" stroke="#000" stroke-width="1" stroke-dasharray="3 3" stroke-dashoffset="2" shape-rendering="crispEdges"/>
<line x1="492" x2="1275" y1="689.5" y2="689.5" stroke="#000" stroke-width="1" stroke-dasharray="18 6" stroke-dashoffset="2" shape-rendering="crispEdges"/>
<line x1="492" x2="1275" y1="773.5" y2="773.5" stroke="#000" stroke-width="1" stroke-dasharray="18 6" stroke-dashoffset="2" shape-rendering="crispEdges"/>
<line x1="492" x2="1275" y1="858.5" y2="858.5" stroke="#000" stroke-width="1" stroke-dasharray="18 6" stroke-dashoffset="2" shape-rendering="crispEdges"/>
<line x1="492" x2="1275" y1="840.5" y2="840.5" stroke="#14aa14" stroke-width="1" shape-rendering="crispEdges"/>
<line x1="858.5" x2="858.5" y1="636" y2="940" stroke="#004040" stroke-width="1" stroke-dasharray="2 2"/>
<polyline points="491.2,684.0 500.5,675.9 509.8,674.7 519.1,679.0 531.6,677.8 544.0,679.6 550.2,684.0 558.2,673.4 568.8,679.6 584.3,682.1 609.1,674.7 630.9,676.5 646.4,667.2 661.9,657.3 680.5,661.0 692.9,656.0 705.4,661.0 724.0,656.0 739.5,659.1 758.1,667.2 776.7,669.7 795.4,671.6 814.0,665.3 829.5,659.1 848.1,654.8 856.2,640.5" stroke="#eeeeb4" stroke-width="1.1"/>
<polyline points="856.2,636.2 869.9,638.7 882.3,634.3 897.8,636.2 914.5,640.5" stroke="#f4f4f0" stroke-width="1"/>
<polyline points="914.5,640.5 919.5,648.6 928.8,656.0 944.3,654.8 963.0,665.3 975.4,677.8 1000.2,687.1 1018.8,690.2 1043.7,696.4 1056.1,699.5 1062.3,690.2 1068.5,700.7 1080.9,699.5" stroke="#f0ec9a" stroke-width="1.1"/>
<polyline points="1080.9,699.5 1096.4,711.9 1111.9,721.2 1133.7,724.3 1152.3,735.5 1167.8,731.8 1177.1,739.8 1186.4,730.5" stroke="#f0e070" stroke-width="1.1"/>
<polyline points="1186.4,730.5 1198.8,739.8 1211.3,752.3 1220.6,749.1 1236.1,756.6 1254.7,754.1 1264.0,764.7 1273.3,767.8" stroke="#f0c85a" stroke-width="1.1"/>
</svg>
<div class="t" style="left:2px;top:56px;font-weight:bold;font-size:13px;line-height:12px;height:12px">30</div>
<div class="t" style="left:2px;top:140px;font-weight:bold;font-size:13px;line-height:12px;height:12px">20</div>
<div class="t" style="left:2px;top:225px;font-weight:bold;font-size:13px;line-height:12px;height:12px">10</div>
</div>
<div class="a" style="left:1277px;top:633px;width:2px;height:310px;background:#e8e6e0;"></div>
<div class="a" style="left:489px;top:949px;width:787px;height:53px;border:1px solid #808080;box-shadow:inset 1px 1px 0 #fff, 1px 1px 0 #fff"></div>
<div class="a" style="left:494px;top:945px;width:40px;height:12px;background:#d4d0c8;"></div>
<div class="t" style="left:496px;top:945px;">Display</div>
<div class="cb" style="left:496px;top:960px"><i></i><svg class="a" style="left:2px;top:2px" width="9" height="9" viewBox="0 0 9 9"><path d="M1 3.5 L3.5 6 L8 1.5" fill="none" stroke="#000" stroke-width="2"/></svg></div>
<div class="t" style="left:515px;top:962px;letter-spacing:-0.2px;width:31px;overflow:hidden;">Tracks</div>
<div class="cb" style="left:549px;top:960px"><i></i></div>
<div class="t" style="left:569px;top:962px;letter-spacing:-0.2px;">Pnts</div>
<div class="cb" style="left:594px;top:960px"><i></i></div>
<div class="t" style="left:613px;top:962px;letter-spacing:-0.2px;">SDoP</div>
<div class="cb" style="left:645px;top:960px"><i></i></div>
<div class="t" style="left:665px;top:962px;letter-spacing:-0.2px;">Vic.</div>
<div class="cb" style="left:689px;top:960px"><i></i></div>
<div class="t" style="left:709px;top:962px;letter-spacing:-0.2px;">Ovl.</div>
<div class="cb" style="left:734px;top:960px"><i></i><svg class="a" style="left:2px;top:2px" width="9" height="9" viewBox="0 0 9 9"><path d="M1 3.5 L3.5 6 L8 1.5" fill="none" stroke="#000" stroke-width="2"/></svg></div>
<div class="t" style="left:754px;top:962px;letter-spacing:-0.2px;">Sats</div>
<div class="cb" style="left:781px;top:960px"><i></i></div>
<div class="t" style="left:800px;top:962px;letter-spacing:-0.2px;">Acc</div>
<div class="cb" style="left:826px;top:960px"><i></i></div>
<div class="t" style="left:845px;top:962px;letter-spacing:-0.2px;">HDoP</div>
<div class="rb" style="left:526px;top:984px;"><div class="a" style="left:3px;top:3px;width:4px;height:4px;border-radius:50%;background:#000"></div></div>
<div class="t" style="left:544px;top:984px;">knots</div>
<div class="rb" style="left:579px;top:984px;"></div>
<div class="t" style="left:596px;top:984px;">km/h</div>
<div class="rb" style="left:632px;top:984px;"></div>
<div class="t" style="left:649px;top:984px;">mph</div>
<div class="btn" style="left:681px;top:979px;width:31px;height:21px"><i></i></div>
<div class="t" style="left:693px;top:984px;">&lt;</div>
<div class="btn" style="left:714px;top:979px;width:38px;height:21px"><i></i></div>
<div class="t" style="left:722px;top:984px;">Stop</div>
<div class="btn" style="left:754px;top:979px;width:31px;height:21px"><i></i></div>
<div class="t" style="left:766px;top:984px;">&gt;</div>
<div class="t" style="left:787px;top:984px;">Speed:</div>
<div class="sunk2" style="left:826px;top:977px;width:52px;height:22px"><i style="background:#d4d0c8"></i></div>
<div class="t" style="left:831px;top:981px;">0.10s</div>
<div class="btn" style="left:862px;top:979px;width:15px;height:9px"><i></i></div>
<svg class="a" style="left:862px;top:979px" width="15" height="9"><path d="M4.5 6.0 L7.5 3.0 L10.5 6.0Z" fill="#000"/></svg>
<div class="btn" style="left:862px;top:988px;width:15px;height:9px"><i></i></div>
<svg class="a" style="left:862px;top:988px" width="15" height="9"><path d="M4.5 3.0 L7.5 6.0 L10.5 3.0Z" fill="#000"/></svg>
<div class="btn" style="left:495px;top:980px;width:16px;height:9px"><i></i></div>
<svg class="a" style="left:495px;top:980px" width="16" height="9"><path d="M5.0 6.0 L8.0 3.0 L11.0 6.0Z" fill="#000"/></svg>
<div class="btn" style="left:495px;top:989px;width:16px;height:10px"><i></i></div>
<svg class="a" style="left:495px;top:989px" width="16" height="10"><path d="M5.0 3.5 L8.0 6.5 L11.0 3.5Z" fill="#000"/></svg>
<div class="a" style="left:65px;top:1006px;width:1214px;height:1px;background:#fff;"></div>
<div class="sunk" style="left:1191px;top:1008px;width:26px;height:16px;border-bottom:none"></div>
<div class="sunk" style="left:1219px;top:1008px;width:28px;height:16px;border-bottom:none"></div>
<div class="sunk" style="left:1249px;top:1008px;width:30px;height:16px;border-bottom:none"></div>
<svg class="a" style="left:1266px;top:1010px" width="13" height="13" viewBox="0 0 13 13"><path d="M13 1 L1 13 M13 5 L5 13 M13 9 L9 13" stroke="#808080" stroke-width="1.4"/><path d="M13 0 L0 13 M13 4 L4 13 M13 8 L8 13" stroke="#fff" stroke-width="1"/></svg>
</body></html>
